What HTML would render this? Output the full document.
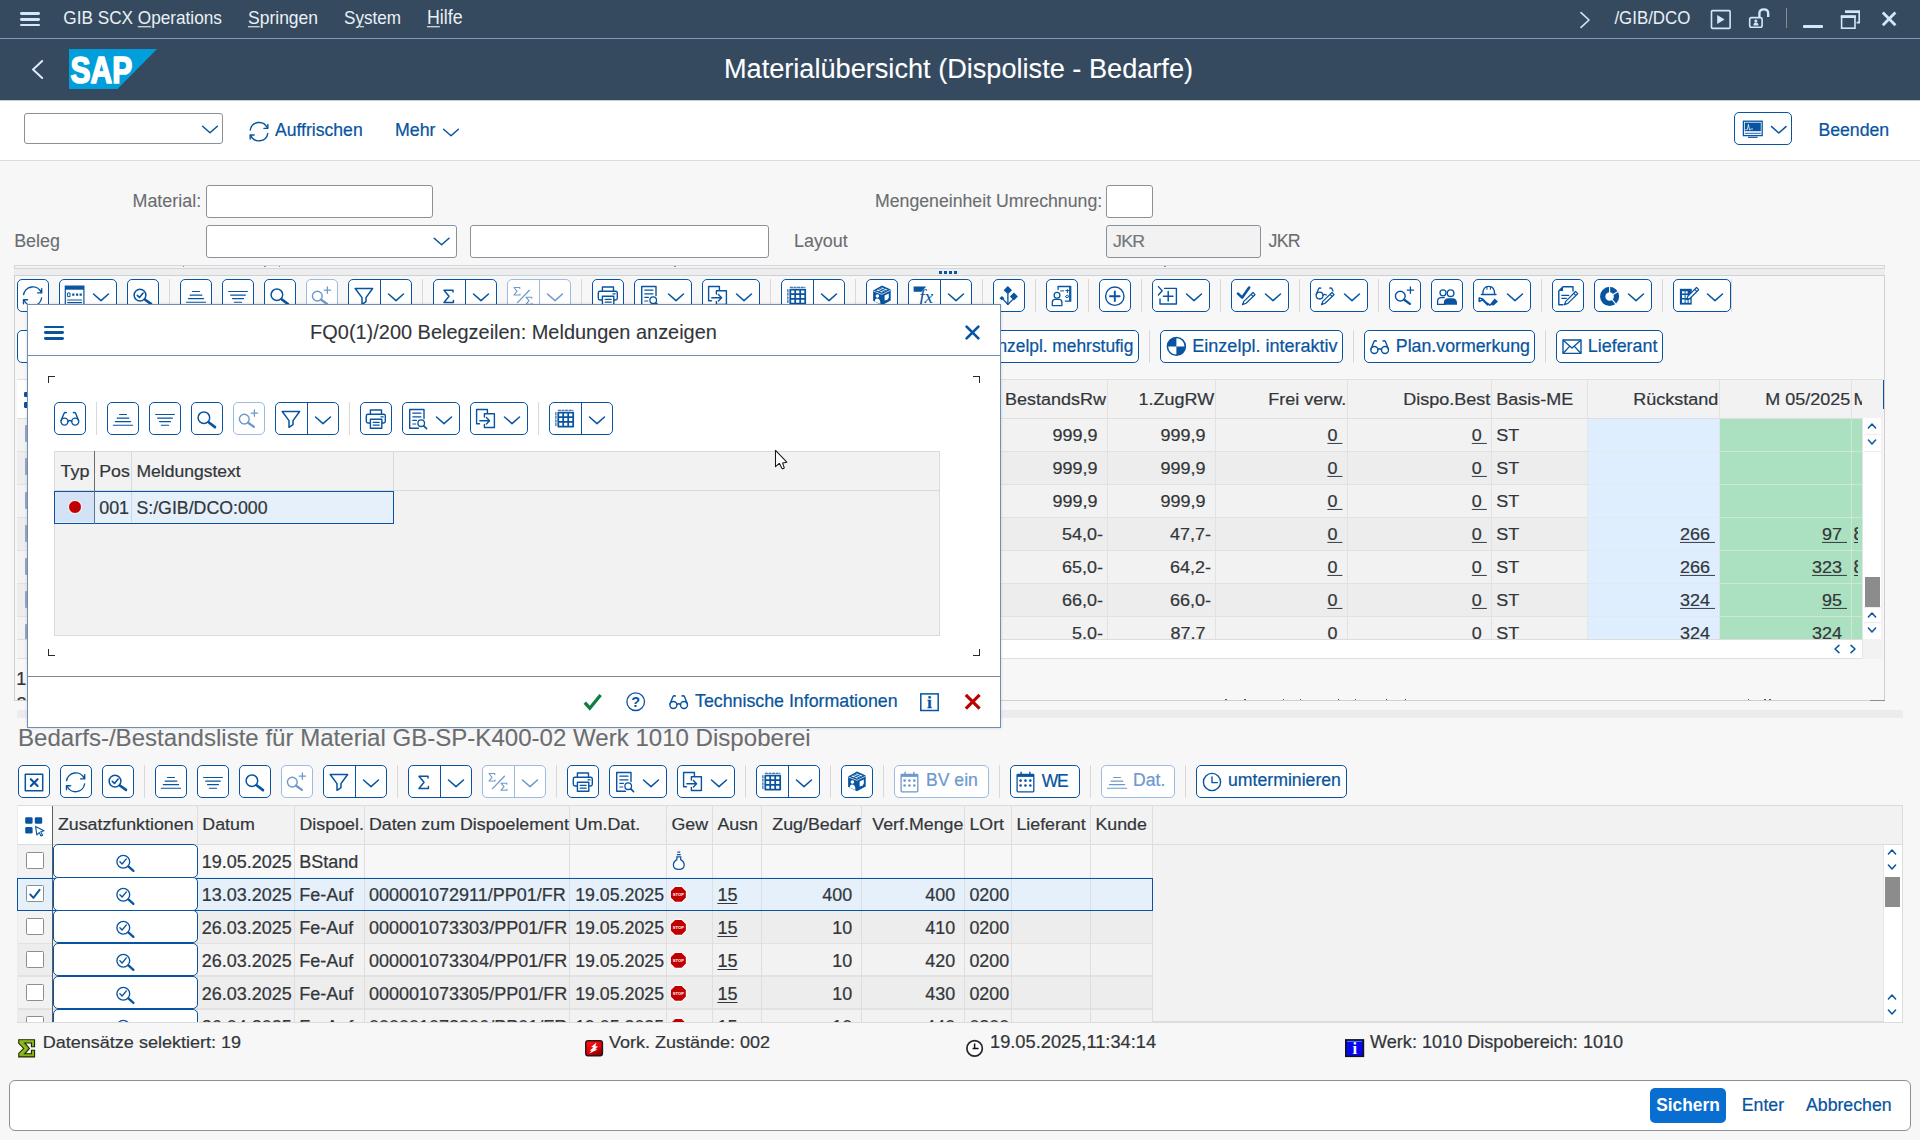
<!DOCTYPE html>
<html><head><meta charset="utf-8"><title>SAP</title>
<style>
*{box-sizing:border-box;}
html,body{margin:0;padding:0;}
body{width:1920px;height:1140px;position:relative;overflow:hidden;background:#f7f7f7;font-family:"Liberation Sans",sans-serif;font-size:17.8px;color:#32363a;-webkit-text-stroke:0.22px;}
div{position:absolute;}
svg{position:absolute;overflow:visible;}
.b{background:#fff;border:1.3px solid #0854a0;border-radius:5px;}
.bd{background:#fff;border:1.3px solid #9bbbe0;border-radius:5px;}
.sep{width:1px;background:#d9d9d9;}
.inp{background:#fff;border:1.3px solid #89919a;border-radius:3px;}
u{text-decoration:underline;text-underline-offset:2.2px;text-decoration-thickness:1px;}
</style></head><body>
<div class="" style="left:0px;top:0px;width:1920px;height:100px;background:#354a5f"></div>
<div class="" style="left:0px;top:38px;width:1920px;height:1.2px;background:#7f9cbc"></div>
<div class="" style="left:19.8px;top:12px;width:20.4px;height:2.8px;background:#d3e6fb;border-radius:1.4px"></div>
<div class="" style="left:19.8px;top:17.8px;width:20.4px;height:2.8px;background:#d3e6fb;border-radius:1.4px"></div>
<div class="" style="left:19.8px;top:23.6px;width:20.4px;height:2.8px;background:#d3e6fb;border-radius:1.4px"></div>
<div style="top:6.00px;font-size:17.2px;line-height:24px;color:#eaf0f6;white-space:pre;transform:scaleY(1.1);left:63.3px;transform-origin:0 18.00px;-webkit-text-stroke:0;">GIB SCX <u>O</u>perations</div>
<div style="top:6.00px;font-size:17.5px;line-height:24px;color:#eaf0f6;white-space:pre;transform:scaleY(1.1);left:248px;transform-origin:0 18.00px;-webkit-text-stroke:0;"><u>S</u>pringen</div>
<div style="top:7.00px;font-size:17.1px;line-height:24px;color:#eaf0f6;white-space:pre;transform:scaleY(1.1);left:344px;transform-origin:0 17.00px;-webkit-text-stroke:0;">S<u>y</u>stem</div>
<div style="top:6.00px;font-size:17.8px;line-height:24px;color:#eaf0f6;white-space:pre;transform:scaleY(1.1);left:427px;transform-origin:0 18.00px;-webkit-text-stroke:0;"><u>H</u>ilfe</div>
<svg style="left:1578px;top:10px" width="14" height="20" viewBox="0 0 14 20"><path d="M3 2.6 L11 10 L3 17.4" fill="none" stroke="#d3e6fb" stroke-width="1.6" stroke-linecap="round" stroke-linejoin="round"/></svg>
<div style="top:7.20px;font-size:16.9px;line-height:24px;color:#eaf0f6;white-space:pre;transform:scaleY(1.05);left:1614.4px;transform-origin:0 17.00px;-webkit-text-stroke:0;">/GIB/DCO</div>
<svg style="left:1710px;top:9px" width="22" height="22" viewBox="0 0 22 22"><rect x="1.5" y="1.6" width="18.6" height="17.8" rx="1" fill="none" stroke="#d3e6fb" stroke-width="1.6"/><path d="M7.2 6 L14.6 10.5 L7.2 15 Z" fill="#d3e6fb"/></svg>
<svg style="left:1747px;top:6px" width="24" height="24" viewBox="0 0 24 24"><path d="M12.4 11.6 V7.4 Q12.4 3.4 16.8 3.4 Q21.2 3.4 21.2 7.4 V11" fill="none" stroke="#d3e6fb" stroke-width="2.4" stroke-linecap="butt"/><rect x="2.7" y="11.6" width="12.4" height="9.6" rx="1.8" fill="none" stroke="#d3e6fb" stroke-width="1.6"/><circle cx="8.9" cy="15" r="1.5" fill="#d3e6fb"/><path d="M6.4 19.4 Q6.4 16.6 8.9 16.6 Q11.4 16.6 11.4 19.4 Z" fill="#d3e6fb"/></svg>
<div class="" style="left:1786px;top:8px;width:1.2px;height:20px;background:#8d8f84"></div>
<div class="" style="left:1803px;top:25px;width:19.6px;height:3px;background:#d3e6fb;border-radius:1px"></div>
<svg style="left:1840px;top:9px" width="22" height="22" viewBox="0 0 22 22"><path d="M5.6 3.2 H19.2 V13.6 H16.6" fill="none" stroke="#d3e6fb" stroke-width="1.6" stroke-linejoin="miter"/><path d="M5 2.6 H20" stroke="#d3e6fb" stroke-width="2.6"/><rect x="1.6" y="7.6" width="13.4" height="11.6" fill="none" stroke="#d3e6fb" stroke-width="1.6" stroke-linejoin="miter"/><path d="M0.8 7.6 H15.8" stroke="#d3e6fb" stroke-width="2.8"/></svg>
<svg style="left:1880px;top:10px" width="18" height="18" viewBox="0 0 18 18"><path d="M2.8 2.6 L15.4 15.2 M15.4 2.6 L2.8 15.2" fill="none" stroke="#d3e6fb" stroke-width="2.8" stroke-linecap="butt"/></svg>
<svg style="left:30px;top:58px" width="16" height="24" viewBox="0 0 16 24"><path d="M12.2 3 L3 11.4 L12.2 20" fill="none" stroke="#dfe9ff" stroke-width="2" stroke-linecap="round" stroke-linejoin="round"/></svg>
<svg style="left:69px;top:49px" width="89" height="40" viewBox="0 0 89 40"><path d="M0 0 H88 L48.5 40 H0 Z" fill="#009fdb"/><text x="1.6" y="33.9" font-family="Liberation Sans" font-weight="bold" font-size="37.6" fill="#fff" textLength="61.6" lengthAdjust="spacingAndGlyphs" stroke="#fff" stroke-width="1.7" stroke-linejoin="round">SAP</text></svg>
<div style="top:57.40px;font-size:27.15px;line-height:24px;color:#fff;white-space:pre;transform:scaleY(1.0);left:458.5px;width:1000px;text-align:center;transform-origin:50% 21.00px;-webkit-text-stroke:0.1px;">Materialübersicht (Dispoliste - Bedarfe)</div>
<div class="" style="left:0px;top:100px;width:1920px;height:61px;background:#fff;border-bottom:1.3px solid #dcdcdc"></div>
<div class="" style="left:0px;top:100px;width:1920px;height:0.8px;background:#c8ccd1"></div>
<div class="inp" style="left:24.2px;top:113px;width:199px;height:31px;"></div>
<svg style="left:201px;top:124px" width="18" height="12" viewBox="0 0 18 12"><path d="M1.6 2.2 L9 8.8 L16.4 2.2" fill="none" stroke="#0854a0" stroke-width="1.5" stroke-linecap="round" stroke-linejoin="round"/></svg>
<svg style="left:247px;top:115px" width="32" height="32" viewBox="0 0 32 32"><g transform="translate(-3.2,-0.2) scale(0.975)"><path d="M6.6 15.6 A9.2 9.2 0 0 1 24.2 13.6" fill="none" stroke="#0854a0" stroke-width="1.4" stroke-linecap="round" stroke-linejoin="round" /><path d="M24.6 19 A9.2 9.2 0 0 1 7 21" fill="none" stroke="#0854a0" stroke-width="1.4" stroke-linecap="round" stroke-linejoin="round" /><path d="M20.6 13.9 L24.7 13.9 L24.7 9.8" fill="none" stroke="#0854a0" stroke-width="1.4" stroke-linecap="round" stroke-linejoin="round" /><path d="M10.6 20.7 L6.5 20.7 L6.5 24.8" fill="none" stroke="#0854a0" stroke-width="1.4" stroke-linecap="round" stroke-linejoin="round" /></g></svg>
<div style="top:118.00px;font-size:17.6px;line-height:24px;color:#0854a0;white-space:pre;transform:scaleY(1.05);left:275px;transform-origin:0 18.00px;">Auffrischen</div>
<div style="top:118.00px;font-size:17.8px;line-height:24px;color:#0854a0;white-space:pre;transform:scaleY(1.05);left:395px;transform-origin:0 18.00px;">Mehr</div>
<svg style="left:442px;top:127px" width="18" height="12" viewBox="0 0 18 12"><path d="M1.6 2.2 L9 8.8 L16.4 2.2" fill="none" stroke="#0854a0" stroke-width="1.5" stroke-linecap="round" stroke-linejoin="round"/></svg>
<div class="b" style="left:1734px;top:112px;width:58px;height:33px;"></div>
<svg style="left:1734px;top:112px" width="58" height="33" viewBox="0 0 58 33"><rect x="9.4" y="9.2" width="18.8" height="14.4" fill="#fff" stroke="#0854a0" stroke-width="1.3"/><rect x="10.8" y="10.6" width="16" height="8.6" fill="#0854a0"/><path d="M11.4 17.6 H13.4 L14.4 12.4 L15.6 18.2 L16.6 17 H19" fill="none" stroke="#dbe8f6" stroke-width="0.9"/><path d="M10.8 21.3 H26.8" stroke="#0854a0" stroke-width="0.9"/><path d="M14 25.3 H23.6" stroke="#0854a0" stroke-width="1.2"/><path d="M37.6 14.6 L44.8 21 L52 14.6" fill="none" stroke="#0854a0" stroke-width="1.5" stroke-linecap="round" stroke-linejoin="round"/></svg>
<div style="top:118.00px;font-size:17.7px;line-height:24px;color:#0854a0;white-space:pre;transform:scaleY(1.05);left:1818.4px;transform-origin:0 18.00px;">Beenden</div>
<div style="top:189.20px;font-size:17.9px;line-height:24px;color:#6a6d70;white-space:pre;transform:scaleY(1.06);-webkit-text-stroke:0.1px;left:132.5px;transform-origin:0 18.00px;">Material:</div>
<div class="inp" style="left:206px;top:185px;width:227px;height:33px;"></div>
<div style="top:228.80px;font-size:17.9px;line-height:24px;color:#6a6d70;white-space:pre;transform:scaleY(1.06);-webkit-text-stroke:0.1px;left:14.2px;transform-origin:0 18.00px;">Beleg</div>
<div class="inp" style="left:206px;top:225px;width:251px;height:33px;"></div>
<svg style="left:432px;top:236px" width="20" height="12" viewBox="0 0 20 12"><path d="M2.2 2.2 L9.6 8.8 L17 2.2" fill="none" stroke="#0854a0" stroke-width="1.5" stroke-linecap="round" stroke-linejoin="round"/></svg>
<div class="inp" style="left:470px;top:225px;width:299px;height:33px;"></div>
<div style="top:228.80px;font-size:17.9px;line-height:24px;color:#6a6d70;white-space:pre;transform:scaleY(1.06);-webkit-text-stroke:0.1px;left:794px;transform-origin:0 18.00px;">Layout</div>
<div style="top:189.20px;font-size:17.7px;line-height:24px;color:#6a6d70;white-space:pre;transform:scaleY(1.06);-webkit-text-stroke:0.1px;left:875px;transform-origin:0 18.00px;">Mengeneinheit Umrechnung:</div>
<div class="inp" style="left:1106px;top:185px;width:47px;height:33px;"></div>
<div class="inp" style="left:1106px;top:225px;width:155px;height:33px;background:#f2f2f2"></div>
<div style="top:228.80px;font-size:17.8px;line-height:24px;color:#74777a;white-space:pre;transform:scaleY(0.965);left:1113px;transform-origin:0 18.00px;letter-spacing:-0.7px;">JKR</div>
<div style="top:228.80px;font-size:17.8px;line-height:24px;color:#6a6d70;white-space:pre;transform:scaleY(1.06);-webkit-text-stroke:0.1px;left:1268.5px;transform-origin:0 18.00px;letter-spacing:-0.7px;">JKR</div>
<div class="" style="left:14.2px;top:264.9px;width:1870.6px;height:4.1px;background:#f4f4f4;border:1px solid #d6d6d6"></div>
<div class="" style="left:14.2px;top:269px;width:1870.6px;height:6.2px;background:#ecedef"></div>
<div class="" style="left:14.2px;top:275.1px;width:1870.6px;height:425.5px;background:#f7f7f7;border:1.1px solid #d0d0d0"></div>
<div class="" style="left:939.0px;top:271.2px;width:2.8px;height:2.6px;background:#0854a0"></div>
<div class="" style="left:944.05px;top:271.2px;width:2.8px;height:2.6px;background:#0854a0"></div>
<div class="" style="left:949.1px;top:271.2px;width:2.8px;height:2.6px;background:#0854a0"></div>
<div class="" style="left:954.15px;top:271.2px;width:2.8px;height:2.6px;background:#0854a0"></div>
<div class="b" style="left:17.4px;top:279px;width:32px;height:32.5px;"></div>
<svg style="left:17.4px;top:279px" width="32" height="32" viewBox="0 0 32 32"><path d="M6.6 15.6 A9.2 9.2 0 0 1 24.2 13.6" fill="none" stroke="#0854a0" stroke-width="1.4" stroke-linecap="round" stroke-linejoin="round" /><path d="M24.6 19 A9.2 9.2 0 0 1 7 21" fill="none" stroke="#0854a0" stroke-width="1.4" stroke-linecap="round" stroke-linejoin="round" /><path d="M20.6 13.9 L24.7 13.9 L24.7 9.8" fill="none" stroke="#0854a0" stroke-width="1.4" stroke-linecap="round" stroke-linejoin="round" /><path d="M10.6 20.7 L6.5 20.7 L6.5 24.8" fill="none" stroke="#0854a0" stroke-width="1.4" stroke-linecap="round" stroke-linejoin="round" /></svg>
<div class="b" style="left:59.2px;top:279px;width:58px;height:32.5px;"></div>
<svg style="left:59.2px;top:279px" width="32" height="32" viewBox="0 0 32 32"><rect x="6.3" y="7.1" width="18.6" height="19.5" fill="#fff" stroke="#0854a0" stroke-width="1.2"/><rect x="6.3" y="7.1" width="18.6" height="3.6" fill="#0854a0"/><path d="M9 14h2v3.6h-2z" fill="none" stroke="#0854a0" stroke-width="1" stroke-linecap="round" stroke-linejoin="round" /><path d="M13.2 14.4h2.2v2.4h-2.2z M17 14.4h2.2v2.4h-2.2z M20.6 14.4h2.2v2.4h-2.2z" fill="#0854a0"/><path d="M8.6 21h14 M8.6 23.6h14" fill="none" stroke="#0854a0" stroke-width="1.1" stroke-linecap="round" stroke-linejoin="round" /></svg>
<svg style="left:85.2px;top:279px" width="32" height="32" viewBox="0 0 32 32"><path d="M8.5 15 L16 21.6 L23.5 15" fill="none" stroke="#0854a0" stroke-width="1.5" stroke-linecap="round" stroke-linejoin="round" /></svg>
<div class="b" style="left:127.2px;top:279px;width:32px;height:32.5px;"></div>
<svg style="left:127.2px;top:279px" width="32" height="32" viewBox="0 0 32 32"><circle cx="13" cy="16.1" r="5.9" fill="none" stroke="#0854a0" stroke-width="1.5" stroke-linecap="round" stroke-linejoin="round" /><path d="M17.8 20.5 L24 24.9" fill="none" stroke="#0854a0" stroke-width="2.6" stroke-linecap="round" stroke-linejoin="round" /><path d="M10.3 16.4 L12.5 18.5 L16.1 14" fill="none" stroke="#0854a0" stroke-width="1.6" stroke-linecap="round" stroke-linejoin="round" /></svg>
<div class="" style="left:168.9px;top:279px;width:1px;height:32.5px;background:#d9d9d9"></div>
<div class="b" style="left:180px;top:279px;width:32px;height:32.5px;"></div>
<svg style="left:180px;top:279px" width="32" height="32" viewBox="0 0 32 32"><path d="M12.5 12.5h7 M10.1 16.1h11.8 M8.3 19.6h15.4 M6.4 23.2h19.2" fill="none" stroke="#0854a0" stroke-width="1.1" stroke-linecap="round" stroke-linejoin="round" /></svg>
<div class="b" style="left:222px;top:279px;width:32px;height:32.5px;"></div>
<svg style="left:222px;top:279px" width="32" height="32" viewBox="0 0 32 32"><path d="M6.6 12.5h18.8 M8.6 16.1h14.8 M10.5 19.6h11 M12.4 23.2h7.2" fill="none" stroke="#0854a0" stroke-width="1.1" stroke-linecap="round" stroke-linejoin="round" /></svg>
<div class="b" style="left:264px;top:279px;width:32px;height:32.5px;"></div>
<svg style="left:264px;top:279px" width="32" height="32" viewBox="0 0 32 32"><circle cx="12.9" cy="15.7" r="5.8" fill="none" stroke="#0854a0" stroke-width="1.5" stroke-linecap="round" stroke-linejoin="round" /><path d="M17.6 20.2 L24 25.1" fill="none" stroke="#0854a0" stroke-width="2.6" stroke-linecap="round" stroke-linejoin="round" /></svg>
<div class="bd" style="left:306px;top:279px;width:32px;height:32.5px;"></div>
<svg style="left:306px;top:279px" width="32" height="32" viewBox="0 0 32 32"><circle cx="11.3" cy="17.1" r="4.9" fill="none" stroke="#6d99cc" stroke-width="1.4" stroke-linecap="round" stroke-linejoin="round" /><path d="M15.2 20.7 L20.9 24.9" fill="none" stroke="#6d99cc" stroke-width="2.3" stroke-linecap="round" stroke-linejoin="round" /><path d="M18.2 11.1h6.4 M21.4 7.9v6.4" fill="none" stroke="#6d99cc" stroke-width="1.3" stroke-linecap="round" stroke-linejoin="round" /></svg>
<div class="b" style="left:348px;top:279px;width:64px;height:32.5px;"></div>
<div class="" style="left:379.6px;top:279px;width:1.3px;height:32.5px;background:#0854a0"></div>
<svg style="left:348px;top:279px" width="32" height="32" viewBox="0 0 32 32"><path d="M7.2 9.5 H24.6 L18 18.6 V22.6 L14 25.3 V18.6 Z" fill="none" stroke="#0854a0" stroke-width="1.5" stroke-linecap="round" stroke-linejoin="round" /></svg>
<svg style="left:380px;top:279px" width="32" height="32" viewBox="0 0 32 32"><path d="M8.5 15 L16 21.6 L23.5 15" fill="none" stroke="#0854a0" stroke-width="1.5" stroke-linecap="round" stroke-linejoin="round" /></svg>
<div class="" style="left:421.9px;top:279px;width:1px;height:32.5px;background:#d9d9d9"></div>
<div class="b" style="left:433.2px;top:279px;width:64px;height:32.5px;"></div>
<div class="" style="left:464.8px;top:279px;width:1.3px;height:32.5px;background:#0854a0"></div>
<svg style="left:433.2px;top:279px" width="32" height="32" viewBox="0 0 32 32"><path d="M20 13 V11.2 H11 L16 17.3 L11 23.5 H20.4 V21.6" fill="none" stroke="#0854a0" stroke-width="1.5" stroke-linecap="round" stroke-linejoin="round" /></svg>
<svg style="left:465.2px;top:279px" width="32" height="32" viewBox="0 0 32 32"><path d="M8.5 15 L16 21.6 L23.5 15" fill="none" stroke="#0854a0" stroke-width="1.5" stroke-linecap="round" stroke-linejoin="round" /></svg>
<div class="bd" style="left:507.4px;top:279px;width:64px;height:32.5px;"></div>
<div class="" style="left:539.0px;top:279px;width:1.3px;height:32.5px;background:#9bbbe0"></div>
<svg style="left:507.4px;top:279px" width="32" height="32" viewBox="0 0 32 32"><path d="M12.8 9.5 V8.5 H7 L10 12.3 L7 16 H13 V15" fill="none" stroke="#6d99cc" stroke-width="1.1" stroke-linecap="round" stroke-linejoin="round" /><path d="M10.5 23.6 L22.4 11.2" fill="none" stroke="#6d99cc" stroke-width="1.3" stroke-linecap="round" stroke-linejoin="round" /><path d="M24.8 19.2 V18.2 H19 L22 21.7 L19 25.3 H25 V24.3" fill="none" stroke="#6d99cc" stroke-width="1.1" stroke-linecap="round" stroke-linejoin="round" /></svg>
<svg style="left:539.4px;top:279px" width="32" height="32" viewBox="0 0 32 32"><path d="M8.5 15 L16 21.6 L23.5 15" fill="none" stroke="#6d99cc" stroke-width="1.5" stroke-linecap="round" stroke-linejoin="round" /></svg>
<div class="" style="left:580.9px;top:279px;width:1px;height:32.5px;background:#d9d9d9"></div>
<div class="b" style="left:592px;top:279px;width:32px;height:32.5px;"></div>
<svg style="left:592px;top:279px" width="32" height="32" viewBox="0 0 32 32"><path d="M10.4 12.3 V8 H21.5 V12.3" fill="none" stroke="#0854a0" stroke-width="1.4" stroke-linecap="round" stroke-linejoin="round" /><path d="M10.4 21 H8 Q6.3 21 6.3 19.3 V14 Q6.3 12.3 8 12.3 H23.6 Q25.3 12.3 25.3 14 V19.3 Q25.3 21 23.6 21 H21.8" fill="none" stroke="#0854a0" stroke-width="1.4" stroke-linecap="round" stroke-linejoin="round" /><path d="M10.4 17.2 H21.8 V26.2 H10.4 Z" fill="#fff" stroke="#0854a0" stroke-width="1.4" stroke-linejoin="round"/><path d="M13.2 20.4h6 M13.2 23.2h6 M21 14.8h2.2" fill="none" stroke="#0854a0" stroke-width="1.2" stroke-linecap="round" stroke-linejoin="round" /></svg>
<div class="b" style="left:634.4px;top:279px;width:58px;height:32.5px;"></div>
<svg style="left:634.4px;top:279px" width="32" height="32" viewBox="0 0 32 32"><path d="M16.5 26.2 H7.7 V7.5 H22 V16.5" fill="none" stroke="#0854a0" stroke-width="1.4" stroke-linecap="round" stroke-linejoin="round" /><path d="M10.8 11.2h8.2 M10.8 14.8h8.2 M10.8 18.4h3.6 M10.8 22h3" fill="none" stroke="#0854a0" stroke-width="1.2" stroke-linecap="round" stroke-linejoin="round" /><circle cx="19.2" cy="21.2" r="3.3" fill="none" stroke="#0854a0" stroke-width="1.3" stroke-linecap="round" stroke-linejoin="round" /><path d="M21.7 23.8 L24.6 26.6" fill="none" stroke="#0854a0" stroke-width="1.6" stroke-linecap="round" stroke-linejoin="round" /></svg>
<svg style="left:660.4px;top:279px" width="32" height="32" viewBox="0 0 32 32"><path d="M8.5 15 L16 21.6 L23.5 15" fill="none" stroke="#0854a0" stroke-width="1.5" stroke-linecap="round" stroke-linejoin="round" /></svg>
<div class="b" style="left:702.3px;top:279px;width:58px;height:32.5px;"></div>
<svg style="left:702.3px;top:279px" width="32" height="32" viewBox="0 0 32 32"><path d="M17.4 11 V7.5 H6.6 V21.8 H9.5" fill="none" stroke="#0854a0" stroke-width="1.4" stroke-linecap="round" stroke-linejoin="round" /><path d="M14.4 15 V11.8 H24.4 V25.5 H14.4 V22.5" fill="none" stroke="#0854a0" stroke-width="1.4" stroke-linecap="round" stroke-linejoin="round" /><path d="M9.8 18.8 H19.4 M16.4 15.6 L19.6 18.8 L16.4 22" fill="none" stroke="#0854a0" stroke-width="1.4" stroke-linecap="round" stroke-linejoin="round" /></svg>
<svg style="left:728.3px;top:279px" width="32" height="32" viewBox="0 0 32 32"><path d="M8.5 15 L16 21.6 L23.5 15" fill="none" stroke="#0854a0" stroke-width="1.5" stroke-linecap="round" stroke-linejoin="round" /></svg>
<div class="" style="left:770.1px;top:279px;width:1px;height:32.5px;background:#d9d9d9"></div>
<div class="b" style="left:781.2px;top:279px;width:64px;height:32.5px;"></div>
<div class="" style="left:812.8000000000001px;top:279px;width:1.3px;height:32.5px;background:#0854a0"></div>
<svg style="left:781.2px;top:279px" width="32" height="32" viewBox="0 0 32 32"><path d="M9.3 8.3 H24" fill="none" stroke="#0854a0" stroke-width="1.1" stroke-linecap="round" stroke-linejoin="round" stroke-dasharray='2.2 1.4'/><path d="M6.9 10.5 V24.5" fill="none" stroke="#0854a0" stroke-width="1.1" stroke-linecap="round" stroke-linejoin="round" stroke-dasharray='2.2 1.4'/><path d="M9.3 10.6 H24.2 V24.6 H9.3 Z M14.2 10.6 V24.6 M19.2 10.6 V24.6 M9.3 15.2 H24.2 M9.3 19.9 H24.2" fill="none" stroke="#0854a0" stroke-width="1.75" stroke-linecap="round" stroke-linejoin="round" /></svg>
<svg style="left:813.2px;top:279px" width="32" height="32" viewBox="0 0 32 32"><path d="M8.5 15 L16 21.6 L23.5 15" fill="none" stroke="#0854a0" stroke-width="1.5" stroke-linecap="round" stroke-linejoin="round" /></svg>
<div class="" style="left:854.5px;top:279px;width:1px;height:32.5px;background:#d9d9d9"></div>
<div class="b" style="left:866px;top:279px;width:32px;height:32.5px;"></div>
<svg style="left:866px;top:279px" width="32" height="32" viewBox="0 0 32 32"><path d="M15.95 6.6 L24.7 10.6 V21.6 L15.95 26.2 L7.1 21.8 V11.4 Z" fill="#0854a0"/><path d="M10.2 11.3 L15.9 8.5 L21.6 10.8 L16 13.6 Z" fill="#fff"/><path d="M12.2 10.3 L18 12.7 M14.1 9.4 L19.9 11.7 M13 12.6 L18.8 9.6" stroke="#0854a0" stroke-width="0.9"/><path d="M7.4 12 L16 15.4 L24.5 11.2" fill="none" stroke="#fff" stroke-width="0.7"/><circle cx="11.4" cy="17" r="1.8" fill="#fff"/><path d="M8.8 22.6 Q8.8 19.4 11.6 19.6 Q14.4 19.8 14.4 25 Z" fill="#fff"/><path d="M18.6 16.4 L22.8 14.4 V18.6 L21.4 20.8 L18.6 21.4 Z" fill="#fff"/></svg>
<div class="b" style="left:908.4px;top:279px;width:64px;height:32.5px;"></div>
<div class="" style="left:940.0px;top:279px;width:1.3px;height:32.5px;background:#0854a0"></div>
<svg style="left:908.4px;top:279px" width="32" height="32" viewBox="0 0 32 32"><path d="M5.6 7.4 H18.1 L13.8 12.7 H5.6 Z" fill="#0854a0"/><text x="11.2" y="23.7" font-family="Liberation Serif" font-style="italic" font-size="19.5" fill="#0854a0">fx</text></svg>
<svg style="left:940.4px;top:279px" width="32" height="32" viewBox="0 0 32 32"><path d="M8.5 15 L16 21.6 L23.5 15" fill="none" stroke="#0854a0" stroke-width="1.5" stroke-linecap="round" stroke-linejoin="round" /></svg>
<div class="" style="left:982.0px;top:279px;width:1px;height:32.5px;background:#d9d9d9"></div>
<div class="b" style="left:993.2px;top:279px;width:32px;height:32.5px;"></div>
<svg style="left:993.2px;top:279px" width="32" height="32" viewBox="0 0 32 32"><path d="M14.85 6.95 L19.05 11.15 L14.85 15.35 L10.65 11.15 Z M20.9 13.4 L24.9 17.4 L20.9 21.4 L16.9 17.4 Z M8.9 17.1 L11.4 19.2 L8.9 21.3 L6.4 19.2 Z" fill="#0854a0"/><path d="M14.85 14.4 V25.2" fill="none" stroke="#2f6fb5" stroke-width="1.6" stroke-linecap="round" stroke-linejoin="round" /><path d="M9.8 19.9 L14.85 25.5 L19.6 20.6" fill="none" stroke="#0854a0" stroke-width="1.3" stroke-linecap="round" stroke-linejoin="round" /></svg>
<div class="" style="left:1034.8px;top:279px;width:1px;height:32.5px;background:#d9d9d9"></div>
<div class="b" style="left:1046px;top:279px;width:32px;height:32.5px;"></div>
<svg style="left:1046px;top:279px" width="32" height="32" viewBox="0 0 32 32"><path d="M12.1 10.6 V7.5 H24.7 V22.2 H19.4" fill="none" stroke="#0854a0" stroke-width="1.3" stroke-linecap="round" stroke-linejoin="round" /><path d="M23.5 8 V21.8" fill="none" stroke="#0854a0" stroke-width="0.9" stroke-linecap="round" stroke-linejoin="round" /><path d="M14.6 11.9h3 M19.8 11.6h3.2 M21.4 10.6v3 M19.6 17.4 L21.3 16.2 L23 17.4 L21.3 18.6 Z" fill="none" stroke="#0854a0" stroke-width="1" stroke-linecap="round" stroke-linejoin="round" /><circle cx="11" cy="16.3" r="2.9" fill="#fff" stroke="#0854a0" stroke-width="1.3"/><path d="M6.3 26.6 V23.4 Q6.3 20.4 9.2 20.4 H13 Q15.9 20.4 15.9 23.4 V26.6 Z" fill="#fff" stroke="#0854a0" stroke-width="1.3" stroke-linejoin="round"/></svg>
<div class="" style="left:1087.8px;top:279px;width:1px;height:32.5px;background:#d9d9d9"></div>
<div class="b" style="left:1099px;top:279px;width:32px;height:32.5px;"></div>
<svg style="left:1099px;top:279px" width="32" height="32" viewBox="0 0 32 32"><circle cx="15.8" cy="17.2" r="9.2" fill="none" stroke="#0854a0" stroke-width="1.4" stroke-linecap="round" stroke-linejoin="round" /><path d="M11 17.2h9.6 M15.8 12.4v9.6" fill="none" stroke="#0854a0" stroke-width="1.9" stroke-linecap="round" stroke-linejoin="round" /></svg>
<div class="" style="left:1140.8px;top:279px;width:1px;height:32.5px;background:#d9d9d9"></div>
<div class="b" style="left:1152px;top:279px;width:58px;height:32.5px;"></div>
<svg style="left:1152px;top:279px" width="32" height="32" viewBox="0 0 32 32"><path d="M6.4 7.6 L10.2 11.8 L6.4 16" fill="none" stroke="#0854a0" stroke-width="1.4" stroke-linecap="round" stroke-linejoin="round" /><path d="M12.5 9.4 H24.4 V25 H8 V20" fill="none" stroke="#0854a0" stroke-width="1.4" stroke-linecap="round" stroke-linejoin="round" /><path d="M11.5 17.2h9.4 M16.2 12.5v9.4" fill="none" stroke="#0854a0" stroke-width="1.5" stroke-linecap="round" stroke-linejoin="round" /></svg>
<svg style="left:1178px;top:279px" width="32" height="32" viewBox="0 0 32 32"><path d="M8.5 15 L16 21.6 L23.5 15" fill="none" stroke="#0854a0" stroke-width="1.5" stroke-linecap="round" stroke-linejoin="round" /></svg>
<div class="" style="left:1219.8px;top:279px;width:1px;height:32.5px;background:#d9d9d9"></div>
<div class="b" style="left:1231px;top:279px;width:58px;height:32.5px;"></div>
<svg style="left:1231px;top:279px" width="32" height="32" viewBox="0 0 32 32"><path d="M7 14.6 L11.2 18.6 L18.2 8.6" fill="none" stroke="#0854a0" stroke-width="2.6" stroke-linecap="round" stroke-linejoin="round" /><path d="M11.5 25.6 L15.1 24.3 L24.0 15.7 L22.0 13.5 L13.0 22.1 Z" fill="#fff" stroke="#0854a0" stroke-width="1.2" stroke-linejoin="round"/><path d="M22.2 17.5 L20.1 15.3" stroke="#0854a0" stroke-width="1.1"/><path d="M11.5 25.6 L13.6 24.9 L12.3 23.5 Z" fill="#0854a0"/></svg>
<svg style="left:1257px;top:279px" width="32" height="32" viewBox="0 0 32 32"><path d="M8.5 15 L16 21.6 L23.5 15" fill="none" stroke="#0854a0" stroke-width="1.5" stroke-linecap="round" stroke-linejoin="round" /></svg>
<div class="" style="left:1298.8px;top:279px;width:1px;height:32.5px;background:#d9d9d9"></div>
<div class="b" style="left:1310px;top:279px;width:58px;height:32.5px;"></div>
<svg style="left:1310px;top:279px" width="32" height="32" viewBox="0 0 32 32"><circle cx="9.6" cy="16.6" r="3.4" fill="none" stroke="#0854a0" stroke-width="1.3" stroke-linecap="round" stroke-linejoin="round" /><path d="M6.2 15.6 L8.6 9.8 Q9.2 8.6 10.8 9.2 M13 16.2 Q14.6 14.8 16.2 16 M19.8 9.2 Q21.4 8.6 22 9.8 L23 12" fill="none" stroke="#0854a0" stroke-width="1.3" stroke-linecap="round" stroke-linejoin="round" /><path d="M11.5 25.6 L15.1 24.3 L24.0 15.7 L22.0 13.5 L13.0 22.1 Z" fill="#fff" stroke="#0854a0" stroke-width="1.2" stroke-linejoin="round"/><path d="M22.2 17.5 L20.1 15.3" stroke="#0854a0" stroke-width="1.1"/><path d="M11.5 25.6 L13.6 24.9 L12.3 23.5 Z" fill="#0854a0"/></svg>
<svg style="left:1336px;top:279px" width="32" height="32" viewBox="0 0 32 32"><path d="M8.5 15 L16 21.6 L23.5 15" fill="none" stroke="#0854a0" stroke-width="1.5" stroke-linecap="round" stroke-linejoin="round" /></svg>
<div class="" style="left:1377.8px;top:279px;width:1px;height:32.5px;background:#d9d9d9"></div>
<div class="b" style="left:1389px;top:279px;width:32px;height:32.5px;"></div>
<svg style="left:1389px;top:279px" width="32" height="32" viewBox="0 0 32 32"><circle cx="11.3" cy="17.1" r="4.9" fill="none" stroke="#0854a0" stroke-width="1.4" stroke-linecap="round" stroke-linejoin="round" /><path d="M15.2 20.7 L20.9 24.9" fill="none" stroke="#0854a0" stroke-width="2.3" stroke-linecap="round" stroke-linejoin="round" /><path d="M18.2 11.1h6.4 M21.4 7.9v6.4" fill="none" stroke="#0854a0" stroke-width="1.3" stroke-linecap="round" stroke-linejoin="round" /></svg>
<div class="b" style="left:1431px;top:279px;width:32px;height:32.5px;"></div>
<svg style="left:1431px;top:279px" width="32" height="32" viewBox="0 0 32 32"><circle cx="12" cy="13.8" r="3" fill="#fff"  stroke="#0854a0" stroke-width="1.3" stroke-linecap="round" stroke-linejoin="round" /><path d="M6.6 25.4 V22.4 Q6.6 18.6 10.4 18.6 H13.4" fill="none" stroke="#0854a0" stroke-width="1.3" stroke-linecap="round" stroke-linejoin="round" /><path d="M6.6 25.4 H14" fill="none" stroke="#0854a0" stroke-width="1.3" stroke-linecap="round" stroke-linejoin="round" /><circle cx="19.6" cy="14.2" r="3.3" fill="#fff" stroke="#0854a0" stroke-width="1.4"/><path d="M12.8 25.8 V24 Q12.8 19.2 17.4 19.2 H21.4 Q26 19.2 26 24 V25.8 Z" fill="#0854a0"/></svg>
<div class="b" style="left:1473px;top:279px;width:58px;height:32.5px;"></div>
<svg style="left:1473px;top:279px" width="32" height="32" viewBox="0 0 32 32"><path d="M9.8 15.2 Q9.8 7.4 15.7 7.4 Q21.6 7.4 21.6 15.2" fill="#fff"  stroke="#0854a0" stroke-width="1.3" stroke-linecap="round" stroke-linejoin="round" /><path d="M8.4 15.5 H23" fill="none" stroke="#0854a0" stroke-width="1.4" stroke-linecap="round" stroke-linejoin="round" /><path d="M14 7.8 V10.4 M17.4 7.8 V10.4" fill="none" stroke="#0854a0" stroke-width="1" stroke-linecap="round" stroke-linejoin="round" /><path d="M9.4 20.2 L14.6 25.6" fill="none" stroke="#0854a0" stroke-width="2.2" stroke-linecap="round" stroke-linejoin="round" /><path d="M6.4 19 L8.6 19.6 M6.6 22.2 L8.8 21.4 M6.2 19 V22.4" fill="none" stroke="#0854a0" stroke-width="1.5" stroke-linecap="round" stroke-linejoin="round" /><path d="M16.6 25.8 L21.6 19.4 L25 22.4 L20.6 26.4 Z" fill="#0854a0"/><path d="M14.4 24.4 L17 26.2" fill="none" stroke="#0854a0" stroke-width="1.5" stroke-linecap="round" stroke-linejoin="round" /></svg>
<svg style="left:1499px;top:279px" width="32" height="32" viewBox="0 0 32 32"><path d="M8.5 15 L16 21.6 L23.5 15" fill="none" stroke="#0854a0" stroke-width="1.5" stroke-linecap="round" stroke-linejoin="round" /></svg>
<div class="" style="left:1540.8px;top:279px;width:1px;height:32.5px;background:#d9d9d9"></div>
<div class="b" style="left:1552px;top:279px;width:32px;height:32.5px;"></div>
<svg style="left:1552px;top:279px" width="32" height="32" viewBox="0 0 32 32"><path d="M21 12 V7.8 H11 L6.8 12 V25.8 H11" fill="none" stroke="#0854a0" stroke-width="1.4" stroke-linecap="round" stroke-linejoin="round" /><path d="M11 7.8 V12 H6.8 Z" fill="#0854a0"/><path d="M9.8 16.4h7 M9.8 19.4h4.6" fill="none" stroke="#0854a0" stroke-width="1.1" stroke-linecap="round" stroke-linejoin="round" /><path d="M12.4 25.8 L15.9 24.4 L25.7 14.7 L23.5 12.5 L13.8 22.3 Z" fill="#fff" stroke="#0854a0" stroke-width="1.2" stroke-linejoin="round"/><path d="M23.8 16.5 L21.7 14.4" stroke="#0854a0" stroke-width="1.1"/><path d="M12.4 25.8 L14.5 25.1 L13.1 23.7 Z" fill="#0854a0"/></svg>
<div class="b" style="left:1594px;top:279px;width:58px;height:32.5px;"></div>
<svg style="left:1594px;top:279px" width="32" height="32" viewBox="0 0 32 32"><circle cx="15.6" cy="17.4" r="6.9" fill="none" stroke="#0854a0" stroke-width="5.3"/><path d="M15.6 17.4 L15.6 6.5 M15.6 17.4 L25.4 11.8 M15.6 17.4 L22.6 26.2" stroke="#fff" stroke-width="1.1"/></svg>
<svg style="left:1620px;top:279px" width="32" height="32" viewBox="0 0 32 32"><path d="M8.5 15 L16 21.6 L23.5 15" fill="none" stroke="#0854a0" stroke-width="1.5" stroke-linecap="round" stroke-linejoin="round" /></svg>
<div class="" style="left:1661.8px;top:279px;width:1px;height:32.5px;background:#d9d9d9"></div>
<div class="b" style="left:1673px;top:279px;width:58px;height:32.5px;"></div>
<svg style="left:1673px;top:279px" width="32" height="32" viewBox="0 0 32 32"><rect x="6.9" y="9.8" width="11.8" height="15.8" fill="#0854a0"/><path d="M9 12.2h2.6v2.4h-2.6z M12.6 12.2h2v2.4h-2z M9 16h2.6v3h-2.6z M12.6 16h2v3h-2z M9 20.4h2.6v3.4h-2.6z M12.6 20.4h2v3.4h-2z M15.6 20.4h1.8v3.4h-1.8z" fill="#fff"/><path d="M13.6 20.6 L17.1 19.2 L25.7 10.7 L23.5 8.5 L15.0 17.1 Z" fill="#fff" stroke="#0854a0" stroke-width="1.2" stroke-linejoin="round"/><path d="M23.8 12.5 L21.7 10.4" stroke="#0854a0" stroke-width="1.1"/><path d="M13.6 20.6 L15.7 19.9 L14.3 18.5 Z" fill="#0854a0"/></svg>
<svg style="left:1699px;top:279px" width="32" height="32" viewBox="0 0 32 32"><path d="M8.5 15 L16 21.6 L23.5 15" fill="none" stroke="#0854a0" stroke-width="1.5" stroke-linecap="round" stroke-linejoin="round" /></svg>
<div class="" style="left:1730.9px;top:279px;width:1px;height:32.5px;background:#d9d9d9"></div>
<div class="b" style="left:17.4px;top:330px;width:60px;height:32.5px;"></div>
<div class="b" style="left:860px;top:330px;width:279px;height:32.5px;"></div>
<div style="top:333.60px;font-size:17.35px;line-height:24px;color:#0854a0;white-space:pre;transform:scaleY(1.03);left:982.0px;transform-origin:0 18.00px;">Einzelpl. mehrstufig</div>
<div class="" style="left:1148.7px;top:330px;width:1px;height:32.5px;background:#d9d9d9"></div>
<div class="b" style="left:1160px;top:330px;width:183px;height:32.5px;"></div>
<svg style="left:1165.5px;top:336.2px" width="20" height="20" viewBox="0 0 20 20"><g transform="scale(1.04)"><circle cx="10" cy="10" r="8.6" fill="none" stroke="#0854a0" stroke-width="1.5" stroke-linecap="round" stroke-linejoin="round" /><path d="M10 10 V1.4 A8.6 8.6 0 0 0 1.4 10 Z M10 10 V18.6 A8.6 8.6 0 0 0 18.6 10 Z" fill="#0854a0"/></g></svg>
<div style="top:333.60px;font-size:18.05px;line-height:24px;color:#0854a0;white-space:pre;transform:scaleY(1.03);left:1192.3px;transform-origin:0 18.00px;">Einzelpl. interaktiv</div>
<div class="" style="left:1352.9px;top:330px;width:1px;height:32.5px;background:#d9d9d9"></div>
<div class="b" style="left:1364px;top:330px;width:171px;height:32.5px;"></div>
<svg style="left:1369.6px;top:339.6px" width="20" height="20" viewBox="0 0 20 20"><g transform="scale(1.0)"><circle cx="4.4" cy="10" r="3.5" fill="none" stroke="#0854a0" stroke-width="1.4" stroke-linecap="round" stroke-linejoin="round" /><circle cx="15" cy="10" r="3.5" fill="none" stroke="#0854a0" stroke-width="1.4" stroke-linecap="round" stroke-linejoin="round" /><path d="M7.9 9.6 Q9.7 8 11.5 9.6 M1 9 L3.9 1.8 Q4.5 0.4 6.3 1 M18.4 9 L15.5 1.8 Q14.9 0.4 13.1 1" fill="none" stroke="#0854a0" stroke-width="1.4" stroke-linecap="round" stroke-linejoin="round" /></g></svg>
<div style="top:333.60px;font-size:17.75px;line-height:24px;color:#0854a0;white-space:pre;transform:scaleY(1.03);left:1395.8px;transform-origin:0 18.00px;">Plan.vormerkung</div>
<div class="" style="left:1544.9px;top:330px;width:1px;height:32.5px;background:#d9d9d9"></div>
<div class="b" style="left:1556px;top:330px;width:107px;height:32.5px;"></div>
<svg style="left:1561.6px;top:337.4px" width="20" height="20" viewBox="0 0 20 20"><g transform="scale(1.0)"><rect x="1" y="3" width="18" height="13.4" fill="none" stroke="#0854a0" stroke-width="1.4" stroke-linecap="round" stroke-linejoin="round" /><path d="M1.4 3.4 L10 11 L18.6 3.4 M1.4 16 L7.4 9.6 M18.6 16 L12.6 9.6" fill="none" stroke="#0854a0" stroke-width="1.3" stroke-linecap="round" stroke-linejoin="round" /></g></svg>
<div style="top:333.60px;font-size:17.9px;line-height:24px;color:#0854a0;white-space:pre;transform:scaleY(1.03);left:1587.8px;transform-origin:0 18.00px;">Lieferant</div>
<div class="" style="left:17px;top:379.4px;width:1866px;height:39.80000000000001px;background:#f2f2f2"></div>
<div class="" style="left:17px;top:379.4px;width:40px;height:38.80000000000001px;background:#fff"></div>
<div class="" style="left:17px;top:418.2px;width:1845.4px;height:33.05000000000001px;background:#f2f2f2"></div>
<div class="" style="left:1587.4px;top:418.2px;width:132.0999999999999px;height:33.05000000000001px;background:#dfeeff"></div>
<div class="" style="left:1719.5px;top:418.2px;width:142.9000000000001px;height:33.05000000000001px;background:#abe0c0"></div>
<div class="" style="left:17px;top:451.25px;width:1845.4px;height:33.049999999999955px;background:#ededed"></div>
<div class="" style="left:1587.4px;top:451.25px;width:132.0999999999999px;height:33.049999999999955px;background:#dfeeff"></div>
<div class="" style="left:1719.5px;top:451.25px;width:142.9000000000001px;height:33.049999999999955px;background:#abe0c0"></div>
<div class="" style="left:17px;top:484.29999999999995px;width:1845.4px;height:33.05000000000007px;background:#f2f2f2"></div>
<div class="" style="left:1587.4px;top:484.29999999999995px;width:132.0999999999999px;height:33.05000000000007px;background:#dfeeff"></div>
<div class="" style="left:1719.5px;top:484.29999999999995px;width:142.9000000000001px;height:33.05000000000007px;background:#abe0c0"></div>
<div class="" style="left:17px;top:517.35px;width:1845.4px;height:33.049999999999955px;background:#ededed"></div>
<div class="" style="left:1587.4px;top:517.35px;width:132.0999999999999px;height:33.049999999999955px;background:#dfeeff"></div>
<div class="" style="left:1719.5px;top:517.35px;width:142.9000000000001px;height:33.049999999999955px;background:#abe0c0"></div>
<div class="" style="left:17px;top:550.4px;width:1845.4px;height:33.05000000000007px;background:#f2f2f2"></div>
<div class="" style="left:1587.4px;top:550.4px;width:132.0999999999999px;height:33.05000000000007px;background:#dfeeff"></div>
<div class="" style="left:1719.5px;top:550.4px;width:142.9000000000001px;height:33.05000000000007px;background:#abe0c0"></div>
<div class="" style="left:17px;top:583.45px;width:1845.4px;height:33.049999999999955px;background:#ededed"></div>
<div class="" style="left:1587.4px;top:583.45px;width:132.0999999999999px;height:33.049999999999955px;background:#dfeeff"></div>
<div class="" style="left:1719.5px;top:583.45px;width:142.9000000000001px;height:33.049999999999955px;background:#abe0c0"></div>
<div class="" style="left:17px;top:616.5px;width:1845.4px;height:22.299999999999955px;background:#f2f2f2"></div>
<div class="" style="left:1587.4px;top:616.5px;width:132.0999999999999px;height:22.299999999999955px;background:#dfeeff"></div>
<div class="" style="left:1719.5px;top:616.5px;width:142.9000000000001px;height:22.299999999999955px;background:#abe0c0"></div>
<div class="" style="left:17px;top:450.65px;width:1570.4px;height:1.2px;background:#e2e2e2"></div>
<div class="" style="left:1587.4px;top:450.65px;width:132.0999999999999px;height:1.2px;background:#e4e8ea"></div>
<div class="" style="left:1719.5px;top:450.65px;width:142.9000000000001px;height:1.2px;background:#cfe6d6"></div>
<div class="" style="left:17px;top:483.69999999999993px;width:1570.4px;height:1.2px;background:#e2e2e2"></div>
<div class="" style="left:1587.4px;top:483.69999999999993px;width:132.0999999999999px;height:1.2px;background:#e4e8ea"></div>
<div class="" style="left:1719.5px;top:483.69999999999993px;width:142.9000000000001px;height:1.2px;background:#cfe6d6"></div>
<div class="" style="left:17px;top:516.75px;width:1570.4px;height:1.2px;background:#e2e2e2"></div>
<div class="" style="left:1587.4px;top:516.75px;width:132.0999999999999px;height:1.2px;background:#e4e8ea"></div>
<div class="" style="left:1719.5px;top:516.75px;width:142.9000000000001px;height:1.2px;background:#cfe6d6"></div>
<div class="" style="left:17px;top:549.8px;width:1570.4px;height:1.2px;background:#e2e2e2"></div>
<div class="" style="left:1587.4px;top:549.8px;width:132.0999999999999px;height:1.2px;background:#e4e8ea"></div>
<div class="" style="left:1719.5px;top:549.8px;width:142.9000000000001px;height:1.2px;background:#cfe6d6"></div>
<div class="" style="left:17px;top:582.85px;width:1570.4px;height:1.2px;background:#e2e2e2"></div>
<div class="" style="left:1587.4px;top:582.85px;width:132.0999999999999px;height:1.2px;background:#e4e8ea"></div>
<div class="" style="left:1719.5px;top:582.85px;width:142.9000000000001px;height:1.2px;background:#cfe6d6"></div>
<div class="" style="left:17px;top:615.9px;width:1570.4px;height:1.2px;background:#e2e2e2"></div>
<div class="" style="left:1587.4px;top:615.9px;width:132.0999999999999px;height:1.2px;background:#e4e8ea"></div>
<div class="" style="left:1719.5px;top:615.9px;width:142.9000000000001px;height:1.2px;background:#cfe6d6"></div>
<div class="" style="left:17px;top:378.79999999999995px;width:1866px;height:1.2px;background:#e0e0e0"></div>
<div class="" style="left:17px;top:417.59999999999997px;width:1866px;height:1.2px;background:#dedede"></div>
<div class="" style="left:1106.9px;top:379.4px;width:1.2px;height:259.4px;background:#e2e2e2"></div>
<div class="" style="left:1214.9px;top:379.4px;width:1.2px;height:259.4px;background:#e2e2e2"></div>
<div class="" style="left:1346.7px;top:379.4px;width:1.2px;height:259.4px;background:#e2e2e2"></div>
<div class="" style="left:1490.7px;top:379.4px;width:1.2px;height:259.4px;background:#e2e2e2"></div>
<div class="" style="left:1586.8000000000002px;top:379.4px;width:1.2px;height:259.4px;background:#e2e2e2"></div>
<div class="" style="left:1718.9px;top:379.4px;width:1.2px;height:259.4px;background:#e2e2e2"></div>
<div class="" style="left:1850.9px;top:379.4px;width:1.2px;height:259.4px;background:#e2e2e2"></div>
<div class="" style="left:1718.9px;top:418.2px;width:1.2px;height:220.59999999999997px;background:#dde6e2"></div>
<div class="" style="left:1850.9px;top:418.2px;width:1.2px;height:220.59999999999997px;background:#cfe6d6"></div>
<div class="" style="left:1586.8000000000002px;top:418.2px;width:1.2px;height:220.59999999999997px;background:#e3e6ea"></div>
<div style="top:387.20px;font-size:18px;line-height:24px;color:#32363a;white-space:pre;transform:scaleY(0.965);left:1005px;transform-origin:0 18.00px;">BestandsRw</div>
<div style="top:387.20px;font-size:18px;line-height:24px;color:#32363a;white-space:pre;transform:scaleY(0.965);right:705.8px;text-align:right;transform-origin:100% 18.00px;">1.ZugRW</div>
<div style="top:387.20px;font-size:18px;line-height:24px;color:#32363a;white-space:pre;transform:scaleY(0.965);right:573.8px;text-align:right;transform-origin:100% 18.00px;">Frei verw.</div>
<div style="top:387.20px;font-size:18px;line-height:24px;color:#32363a;white-space:pre;transform:scaleY(0.965);right:429.79999999999995px;text-align:right;transform-origin:100% 18.00px;">Dispo.Best</div>
<div style="top:387.20px;font-size:18px;line-height:24px;color:#32363a;white-space:pre;transform:scaleY(0.965);left:1496.2px;transform-origin:0 18.00px;">Basis-ME</div>
<div style="top:387.20px;font-size:18px;line-height:24px;color:#32363a;white-space:pre;transform:scaleY(0.965);right:201.79999999999995px;text-align:right;transform-origin:100% 18.00px;">Rückstand</div>
<div style="top:387.20px;font-size:18px;line-height:24px;color:#32363a;white-space:pre;transform:scaleY(0.965);right:69.79999999999995px;text-align:right;transform-origin:100% 18.00px;">M 05/2025</div>
<div class="" style="left:1853.6px;top:383.4px;width:8.4px;height:30px;overflow:hidden"><div style="left:0;top:3.4px;font-size:18px;line-height:24px;transform:scaleY(0.965)">M</div></div>
<div style="top:422.75px;font-size:18px;line-height:24px;color:#32363a;white-space:pre;transform:scaleY(0.965);right:822.4000000000001px;text-align:right;transform-origin:100% 18.00px;">999,9</div>
<div style="top:422.75px;font-size:18px;line-height:24px;color:#32363a;white-space:pre;transform:scaleY(0.965);right:714.4000000000001px;text-align:right;transform-origin:100% 18.00px;">999,9</div>
<div style="top:422.75px;font-size:18px;line-height:24px;color:#32363a;white-space:pre;transform:scaleY(0.965);right:577.5999999999999px;text-align:right;transform-origin:100% 18.00px;"><u>0 </u></div>
<div style="top:422.75px;font-size:18px;line-height:24px;color:#32363a;white-space:pre;transform:scaleY(0.965);right:433.20000000000005px;text-align:right;transform-origin:100% 18.00px;"><u>0 </u></div>
<div style="top:422.75px;font-size:18px;line-height:24px;color:#32363a;white-space:pre;transform:scaleY(0.965);left:1496.2px;transform-origin:0 18.00px;">ST</div>
<div style="top:455.80px;font-size:18px;line-height:24px;color:#32363a;white-space:pre;transform:scaleY(0.965);right:822.4000000000001px;text-align:right;transform-origin:100% 18.00px;">999,9</div>
<div style="top:455.80px;font-size:18px;line-height:24px;color:#32363a;white-space:pre;transform:scaleY(0.965);right:714.4000000000001px;text-align:right;transform-origin:100% 18.00px;">999,9</div>
<div style="top:455.80px;font-size:18px;line-height:24px;color:#32363a;white-space:pre;transform:scaleY(0.965);right:577.5999999999999px;text-align:right;transform-origin:100% 18.00px;"><u>0 </u></div>
<div style="top:455.80px;font-size:18px;line-height:24px;color:#32363a;white-space:pre;transform:scaleY(0.965);right:433.20000000000005px;text-align:right;transform-origin:100% 18.00px;"><u>0 </u></div>
<div style="top:455.80px;font-size:18px;line-height:24px;color:#32363a;white-space:pre;transform:scaleY(0.965);left:1496.2px;transform-origin:0 18.00px;">ST</div>
<div style="top:488.85px;font-size:18px;line-height:24px;color:#32363a;white-space:pre;transform:scaleY(0.965);right:822.4000000000001px;text-align:right;transform-origin:100% 18.00px;">999,9</div>
<div style="top:488.85px;font-size:18px;line-height:24px;color:#32363a;white-space:pre;transform:scaleY(0.965);right:714.4000000000001px;text-align:right;transform-origin:100% 18.00px;">999,9</div>
<div style="top:488.85px;font-size:18px;line-height:24px;color:#32363a;white-space:pre;transform:scaleY(0.965);right:577.5999999999999px;text-align:right;transform-origin:100% 18.00px;"><u>0 </u></div>
<div style="top:488.85px;font-size:18px;line-height:24px;color:#32363a;white-space:pre;transform:scaleY(0.965);right:433.20000000000005px;text-align:right;transform-origin:100% 18.00px;"><u>0 </u></div>
<div style="top:488.85px;font-size:18px;line-height:24px;color:#32363a;white-space:pre;transform:scaleY(0.965);left:1496.2px;transform-origin:0 18.00px;">ST</div>
<div style="top:521.90px;font-size:18px;line-height:24px;color:#32363a;white-space:pre;transform:scaleY(0.965);right:817px;text-align:right;transform-origin:100% 18.00px;">54,0-</div>
<div style="top:521.90px;font-size:18px;line-height:24px;color:#32363a;white-space:pre;transform:scaleY(0.965);right:709px;text-align:right;transform-origin:100% 18.00px;">47,7-</div>
<div style="top:521.90px;font-size:18px;line-height:24px;color:#32363a;white-space:pre;transform:scaleY(0.965);right:577.5999999999999px;text-align:right;transform-origin:100% 18.00px;"><u>0 </u></div>
<div style="top:521.90px;font-size:18px;line-height:24px;color:#32363a;white-space:pre;transform:scaleY(0.965);right:433.20000000000005px;text-align:right;transform-origin:100% 18.00px;"><u>0 </u></div>
<div style="top:521.90px;font-size:18px;line-height:24px;color:#32363a;white-space:pre;transform:scaleY(0.965);left:1496.2px;transform-origin:0 18.00px;">ST</div>
<div style="top:521.90px;font-size:18px;line-height:24px;color:#32363a;white-space:pre;transform:scaleY(0.965);right:205px;text-align:right;transform-origin:100% 18.00px;"><u>266 </u></div>
<div style="top:521.90px;font-size:18px;line-height:24px;color:#32363a;white-space:pre;transform:scaleY(0.965);right:73px;text-align:right;transform-origin:100% 18.00px;"><u>97 </u></div>
<div class="" style="left:1853.6px;top:521.35px;width:4.6px;height:28px;overflow:hidden"><div style="left:0;top:1px;font-size:18px;line-height:24px"><u>8</u></div></div>
<div style="top:554.95px;font-size:18px;line-height:24px;color:#32363a;white-space:pre;transform:scaleY(0.965);right:817px;text-align:right;transform-origin:100% 18.00px;">65,0-</div>
<div style="top:554.95px;font-size:18px;line-height:24px;color:#32363a;white-space:pre;transform:scaleY(0.965);right:709px;text-align:right;transform-origin:100% 18.00px;">64,2-</div>
<div style="top:554.95px;font-size:18px;line-height:24px;color:#32363a;white-space:pre;transform:scaleY(0.965);right:577.5999999999999px;text-align:right;transform-origin:100% 18.00px;"><u>0 </u></div>
<div style="top:554.95px;font-size:18px;line-height:24px;color:#32363a;white-space:pre;transform:scaleY(0.965);right:433.20000000000005px;text-align:right;transform-origin:100% 18.00px;"><u>0 </u></div>
<div style="top:554.95px;font-size:18px;line-height:24px;color:#32363a;white-space:pre;transform:scaleY(0.965);left:1496.2px;transform-origin:0 18.00px;">ST</div>
<div style="top:554.95px;font-size:18px;line-height:24px;color:#32363a;white-space:pre;transform:scaleY(0.965);right:205px;text-align:right;transform-origin:100% 18.00px;"><u>266 </u></div>
<div style="top:554.95px;font-size:18px;line-height:24px;color:#32363a;white-space:pre;transform:scaleY(0.965);right:73px;text-align:right;transform-origin:100% 18.00px;"><u>323 </u></div>
<div class="" style="left:1853.6px;top:554.4px;width:4.6px;height:28px;overflow:hidden"><div style="left:0;top:1px;font-size:18px;line-height:24px"><u>8</u></div></div>
<div style="top:588.00px;font-size:18px;line-height:24px;color:#32363a;white-space:pre;transform:scaleY(0.965);right:817px;text-align:right;transform-origin:100% 18.00px;">66,0-</div>
<div style="top:588.00px;font-size:18px;line-height:24px;color:#32363a;white-space:pre;transform:scaleY(0.965);right:709px;text-align:right;transform-origin:100% 18.00px;">66,0-</div>
<div style="top:588.00px;font-size:18px;line-height:24px;color:#32363a;white-space:pre;transform:scaleY(0.965);right:577.5999999999999px;text-align:right;transform-origin:100% 18.00px;"><u>0 </u></div>
<div style="top:588.00px;font-size:18px;line-height:24px;color:#32363a;white-space:pre;transform:scaleY(0.965);right:433.20000000000005px;text-align:right;transform-origin:100% 18.00px;"><u>0 </u></div>
<div style="top:588.00px;font-size:18px;line-height:24px;color:#32363a;white-space:pre;transform:scaleY(0.965);left:1496.2px;transform-origin:0 18.00px;">ST</div>
<div style="top:588.00px;font-size:18px;line-height:24px;color:#32363a;white-space:pre;transform:scaleY(0.965);right:205px;text-align:right;transform-origin:100% 18.00px;"><u>324 </u></div>
<div style="top:588.00px;font-size:18px;line-height:24px;color:#32363a;white-space:pre;transform:scaleY(0.965);right:73px;text-align:right;transform-origin:100% 18.00px;"><u>95 </u></div>
<div style="top:621.05px;font-size:18px;line-height:24px;color:#32363a;white-space:pre;transform:scaleY(0.965);right:817px;text-align:right;transform-origin:100% 18.00px;">5,0-</div>
<div style="top:621.05px;font-size:18px;line-height:24px;color:#32363a;white-space:pre;transform:scaleY(0.965);right:714.4000000000001px;text-align:right;transform-origin:100% 18.00px;">87,7</div>
<div style="top:621.05px;font-size:18px;line-height:24px;color:#32363a;white-space:pre;transform:scaleY(0.965);right:582.5999999999999px;text-align:right;transform-origin:100% 18.00px;">0</div>
<div style="top:621.05px;font-size:18px;line-height:24px;color:#32363a;white-space:pre;transform:scaleY(0.965);right:438.20000000000005px;text-align:right;transform-origin:100% 18.00px;">0</div>
<div style="top:621.05px;font-size:18px;line-height:24px;color:#32363a;white-space:pre;transform:scaleY(0.965);left:1496.2px;transform-origin:0 18.00px;">ST</div>
<div style="top:621.05px;font-size:18px;line-height:24px;color:#32363a;white-space:pre;transform:scaleY(0.965);right:210px;text-align:right;transform-origin:100% 18.00px;">324</div>
<div style="top:621.05px;font-size:18px;line-height:24px;color:#32363a;white-space:pre;transform:scaleY(0.965);right:78px;text-align:right;transform-origin:100% 18.00px;">324</div>
<div class="" style="left:17px;top:638.8px;width:1866px;height:20px;background:#fff;border-top:1.2px solid #dcdcdc;border-bottom:1.2px solid #e0e0e0"></div>
<div class="" style="left:1862.4px;top:418.2px;width:18.4px;height:220.59999999999997px;background:#fff;border-left:1.2px solid #e4e4e4"></div>
<div class="" style="left:1880.8px;top:418.2px;width:2.6px;height:220.59999999999997px;background:#f2f2f2"></div>
<div class="" style="left:1862.4px;top:638.8px;width:21px;height:20px;background:#f2f2f2;border-left:1.2px solid #e4e4e4"></div>
<svg style="left:1872.4px;top:426px" width="1" height="1"><path d="M-3.6 2 L0 -2 L3.6 2" fill="none" stroke="#0854a0" stroke-width="1.5" stroke-linecap="round" stroke-linejoin="round"/></svg>
<svg style="left:1872.4px;top:441.6px" width="1" height="1"><path d="M-3.6 -2 L0 2 L3.6 -2" fill="none" stroke="#0854a0" stroke-width="1.5" stroke-linecap="round" stroke-linejoin="round"/></svg>
<svg style="left:1872.4px;top:614.8px" width="1" height="1"><path d="M-3.6 2 L0 -2 L3.6 2" fill="none" stroke="#0854a0" stroke-width="1.5" stroke-linecap="round" stroke-linejoin="round"/></svg>
<svg style="left:1872.4px;top:630.4px" width="1" height="1"><path d="M-3.6 -2 L0 2 L3.6 -2" fill="none" stroke="#0854a0" stroke-width="1.5" stroke-linecap="round" stroke-linejoin="round"/></svg>
<div class="" style="left:1865.2px;top:577.4px;width:14.8px;height:29.2px;background:#8c8c8c"></div>
<svg style="left:1836.8px;top:649px" width="1" height="1"><path d="M2 -3.6 L-2 0 L2 3.6" fill="none" stroke="#0854a0" stroke-width="1.5" stroke-linecap="round" stroke-linejoin="round"/></svg>
<svg style="left:1852.6px;top:649px" width="1" height="1"><path d="M-2 -3.6 L2 0 L-2 3.6" fill="none" stroke="#0854a0" stroke-width="1.5" stroke-linecap="round" stroke-linejoin="round"/></svg>
<div class="" style="left:1882.6px;top:380px;width:1.5px;height:29.4px;background:#0854a0"></div>
<div class="" style="left:1863.6px;top:433.6px;width:17px;height:1px;background:#ececec"></div>
<div class="" style="left:1863.6px;top:450.6px;width:17px;height:1px;background:#ececec"></div>
<div class="" style="left:1863.6px;top:606.8px;width:17px;height:1px;background:#ececec"></div>
<div class="" style="left:1863.6px;top:622.4px;width:17px;height:1px;background:#ececec"></div>
<div class="" style="left:182.5px;top:265.8px;width:1.5px;height:1.2px;background:#8a8a8a"></div>
<div class="" style="left:264px;top:265.8px;width:1.5px;height:1.2px;background:#8a8a8a"></div>
<div class="" style="left:278.8px;top:265.8px;width:1.5px;height:1.2px;background:#8a8a8a"></div>
<div class="" style="left:674px;top:265.8px;width:1.5px;height:1.2px;background:#8a8a8a"></div>
<div class="" style="left:1164px;top:265.8px;width:1.5px;height:1.2px;background:#8a8a8a"></div>
<div class="" style="left:1225.2px;top:698.6px;width:1.6px;height:1.0px;background:#555"></div>
<div class="" style="left:1244.4px;top:698.6px;width:1.6px;height:1.0px;background:#555"></div>
<div class="" style="left:1282.7px;top:698.6px;width:1.6px;height:1.0px;background:#555"></div>
<div class="" style="left:1299.5px;top:698.6px;width:1.6px;height:1.0px;background:#555"></div>
<div class="" style="left:1337.8px;top:698.6px;width:1.6px;height:1.0px;background:#555"></div>
<div class="" style="left:1354.6px;top:698.6px;width:1.6px;height:1.0px;background:#555"></div>
<div class="" style="left:1385.7px;top:698.6px;width:1.6px;height:1.0px;background:#555"></div>
<div class="" style="left:1404.9px;top:698.6px;width:1.6px;height:1.0px;background:#555"></div>
<div class="" style="left:1747.5px;top:698.6px;width:1.6px;height:1.0px;background:#555"></div>
<div class="" style="left:1764px;top:698.6px;width:1.6px;height:1.0px;background:#555"></div>
<div class="" style="left:1769px;top:698.6px;width:1.6px;height:1.0px;background:#555"></div>
<div class="" style="left:25px;top:425.4px;width:3px;height:17px;background:#9aa7c7;border-radius:1px"></div>
<div class="" style="left:25px;top:458.45px;width:3px;height:17px;background:#9aa7c7;border-radius:1px"></div>
<div class="" style="left:25px;top:491.49999999999994px;width:3px;height:17px;background:#9aa7c7;border-radius:1px"></div>
<div class="" style="left:25px;top:524.5500000000001px;width:3px;height:17px;background:#9aa7c7;border-radius:1px"></div>
<div class="" style="left:25px;top:557.6px;width:3px;height:17px;background:#9aa7c7;border-radius:1px"></div>
<div class="" style="left:25px;top:590.6500000000001px;width:3px;height:17px;background:#9aa7c7;border-radius:1px"></div>
<div class="" style="left:25px;top:623.7px;width:3px;height:17px;background:#9aa7c7;border-radius:1px"></div>
<div class="" style="left:24.4px;top:391.6px;width:4px;height:5.8px;background:#0854a0;border-radius:1.2px"></div>
<div class="" style="left:24.4px;top:401.6px;width:4px;height:6.2px;background:#0854a0;border-radius:1.2px"></div>
<div style="top:666.80px;font-size:18px;line-height:24px;color:#32363a;white-space:pre;transform:scaleY(1.0);left:16.2px;transform-origin:0 18.00px;">1</div>
<div class="" style="left:16.6px;top:690px;width:12px;height:9.9px;overflow:hidden"><div style="left:0;top:2.2px;font-size:18px;line-height:24px">2</div></div>
<div class="" style="left:17px;top:638.8px;width:20px;height:20px;background:#f3f3f3;border-top:1.2px solid #dcdcdc;border-bottom:1.2px solid #e0e0e0"></div>
<div class="" style="left:17.2px;top:710px;width:1885.6px;height:7.8px;background:#ebecee"></div>
<div class="" style="left:1869.6px;top:699.5px;width:15.2px;height:1.2px;background:#8c8c8c"></div>
<div style="top:726.00px;font-size:24.07px;line-height:24px;color:#6a6d70;white-space:pre;transform:scaleY(0.99);-webkit-text-stroke:0.1px;left:18px;transform-origin:0 20.00px;">Bedarfs-/Bestandsliste für Material GB-SP-K400-02 Werk 1010 Dispoberei</div>
<div class="b" style="left:18px;top:765.2px;width:32px;height:32.5px;"></div>
<svg style="left:18px;top:765.2px" width="32" height="32" viewBox="0 0 32 32"><rect x="7.3" y="9.2" width="17.4" height="16.6" fill="none" stroke="#0854a0" stroke-width="1.5" stroke-linecap="round" stroke-linejoin="round" /><path d="M12.8 14.2 L19.6 21 M19.6 14.2 L12.8 21" fill="none" stroke="#0854a0" stroke-width="2.1" stroke-linecap="round" stroke-linejoin="round" /></svg>
<div class="b" style="left:60.2px;top:765.2px;width:32px;height:32.5px;"></div>
<svg style="left:60.2px;top:765.2px" width="32" height="32" viewBox="0 0 32 32"><path d="M6.6 15.6 A9.2 9.2 0 0 1 24.2 13.6" fill="none" stroke="#0854a0" stroke-width="1.4" stroke-linecap="round" stroke-linejoin="round" /><path d="M24.6 19 A9.2 9.2 0 0 1 7 21" fill="none" stroke="#0854a0" stroke-width="1.4" stroke-linecap="round" stroke-linejoin="round" /><path d="M20.6 13.9 L24.7 13.9 L24.7 9.8" fill="none" stroke="#0854a0" stroke-width="1.4" stroke-linecap="round" stroke-linejoin="round" /><path d="M10.6 20.7 L6.5 20.7 L6.5 24.8" fill="none" stroke="#0854a0" stroke-width="1.4" stroke-linecap="round" stroke-linejoin="round" /></svg>
<div class="b" style="left:102.2px;top:765.2px;width:32px;height:32.5px;"></div>
<svg style="left:102.2px;top:765.2px" width="32" height="32" viewBox="0 0 32 32"><circle cx="13" cy="16.1" r="5.9" fill="none" stroke="#0854a0" stroke-width="1.5" stroke-linecap="round" stroke-linejoin="round" /><path d="M17.8 20.5 L24 24.9" fill="none" stroke="#0854a0" stroke-width="2.6" stroke-linecap="round" stroke-linejoin="round" /><path d="M10.3 16.4 L12.5 18.5 L16.1 14" fill="none" stroke="#0854a0" stroke-width="1.6" stroke-linecap="round" stroke-linejoin="round" /></svg>
<div class="" style="left:143.9px;top:765.2px;width:1px;height:32.5px;background:#d9d9d9"></div>
<div class="b" style="left:155.2px;top:765.2px;width:32px;height:32.5px;"></div>
<svg style="left:155.2px;top:765.2px" width="32" height="32" viewBox="0 0 32 32"><path d="M12.5 12.5h7 M10.1 16.1h11.8 M8.3 19.6h15.4 M6.4 23.2h19.2" fill="none" stroke="#0854a0" stroke-width="1.1" stroke-linecap="round" stroke-linejoin="round" /></svg>
<div class="b" style="left:197px;top:765.2px;width:32px;height:32.5px;"></div>
<svg style="left:197px;top:765.2px" width="32" height="32" viewBox="0 0 32 32"><path d="M6.6 12.5h18.8 M8.6 16.1h14.8 M10.5 19.6h11 M12.4 23.2h7.2" fill="none" stroke="#0854a0" stroke-width="1.1" stroke-linecap="round" stroke-linejoin="round" /></svg>
<div class="b" style="left:239.2px;top:765.2px;width:32px;height:32.5px;"></div>
<svg style="left:239.2px;top:765.2px" width="32" height="32" viewBox="0 0 32 32"><circle cx="12.9" cy="15.7" r="5.8" fill="none" stroke="#0854a0" stroke-width="1.5" stroke-linecap="round" stroke-linejoin="round" /><path d="M17.6 20.2 L24 25.1" fill="none" stroke="#0854a0" stroke-width="2.6" stroke-linecap="round" stroke-linejoin="round" /></svg>
<div class="bd" style="left:281.2px;top:765.2px;width:32px;height:32.5px;"></div>
<svg style="left:281.2px;top:765.2px" width="32" height="32" viewBox="0 0 32 32"><circle cx="11.3" cy="17.1" r="4.9" fill="none" stroke="#6d99cc" stroke-width="1.4" stroke-linecap="round" stroke-linejoin="round" /><path d="M15.2 20.7 L20.9 24.9" fill="none" stroke="#6d99cc" stroke-width="2.3" stroke-linecap="round" stroke-linejoin="round" /><path d="M18.2 11.1h6.4 M21.4 7.9v6.4" fill="none" stroke="#6d99cc" stroke-width="1.3" stroke-linecap="round" stroke-linejoin="round" /></svg>
<div class="b" style="left:323px;top:765.2px;width:64px;height:32.5px;"></div>
<div class="" style="left:354.6px;top:765.2px;width:1.3px;height:32.5px;background:#0854a0"></div>
<svg style="left:323px;top:765.2px" width="32" height="32" viewBox="0 0 32 32"><path d="M7.2 9.5 H24.6 L18 18.6 V22.6 L14 25.3 V18.6 Z" fill="none" stroke="#0854a0" stroke-width="1.5" stroke-linecap="round" stroke-linejoin="round" /></svg>
<svg style="left:355px;top:765.2px" width="32" height="32" viewBox="0 0 32 32"><path d="M8.5 15 L16 21.6 L23.5 15" fill="none" stroke="#0854a0" stroke-width="1.5" stroke-linecap="round" stroke-linejoin="round" /></svg>
<div class="" style="left:396.9px;top:765.2px;width:1px;height:32.5px;background:#d9d9d9"></div>
<div class="b" style="left:407.6px;top:765.2px;width:64px;height:32.5px;"></div>
<div class="" style="left:439.8px;top:765.2px;width:1.3px;height:32.5px;background:#0854a0"></div>
<svg style="left:407.6px;top:765.2px" width="32" height="32" viewBox="0 0 32 32"><path d="M20 13 V11.2 H11 L16 17.3 L11 23.5 H20.4 V21.6" fill="none" stroke="#0854a0" stroke-width="1.5" stroke-linecap="round" stroke-linejoin="round" /></svg>
<svg style="left:439.6px;top:765.2px" width="32" height="32" viewBox="0 0 32 32"><path d="M8.5 15 L16 21.6 L23.5 15" fill="none" stroke="#0854a0" stroke-width="1.5" stroke-linecap="round" stroke-linejoin="round" /></svg>
<div class="bd" style="left:482px;top:765.2px;width:64px;height:32.5px;"></div>
<div class="" style="left:513.6px;top:765.2px;width:1.3px;height:32.5px;background:#9bbbe0"></div>
<svg style="left:482px;top:765.2px" width="32" height="32" viewBox="0 0 32 32"><path d="M12.8 9.5 V8.5 H7 L10 12.3 L7 16 H13 V15" fill="none" stroke="#6d99cc" stroke-width="1.1" stroke-linecap="round" stroke-linejoin="round" /><path d="M10.5 23.6 L22.4 11.2" fill="none" stroke="#6d99cc" stroke-width="1.3" stroke-linecap="round" stroke-linejoin="round" /><path d="M24.8 19.2 V18.2 H19 L22 21.7 L19 25.3 H25 V24.3" fill="none" stroke="#6d99cc" stroke-width="1.1" stroke-linecap="round" stroke-linejoin="round" /></svg>
<svg style="left:514px;top:765.2px" width="32" height="32" viewBox="0 0 32 32"><path d="M8.5 15 L16 21.6 L23.5 15" fill="none" stroke="#6d99cc" stroke-width="1.5" stroke-linecap="round" stroke-linejoin="round" /></svg>
<div class="" style="left:556.1px;top:765.2px;width:1px;height:32.5px;background:#d9d9d9"></div>
<div class="b" style="left:567px;top:765.2px;width:32px;height:32.5px;"></div>
<svg style="left:567px;top:765.2px" width="32" height="32" viewBox="0 0 32 32"><path d="M10.4 12.3 V8 H21.5 V12.3" fill="none" stroke="#0854a0" stroke-width="1.4" stroke-linecap="round" stroke-linejoin="round" /><path d="M10.4 21 H8 Q6.3 21 6.3 19.3 V14 Q6.3 12.3 8 12.3 H23.6 Q25.3 12.3 25.3 14 V19.3 Q25.3 21 23.6 21 H21.8" fill="none" stroke="#0854a0" stroke-width="1.4" stroke-linecap="round" stroke-linejoin="round" /><path d="M10.4 17.2 H21.8 V26.2 H10.4 Z" fill="#fff" stroke="#0854a0" stroke-width="1.4" stroke-linejoin="round"/><path d="M13.2 20.4h6 M13.2 23.2h6 M21 14.8h2.2" fill="none" stroke="#0854a0" stroke-width="1.2" stroke-linecap="round" stroke-linejoin="round" /></svg>
<div class="b" style="left:609px;top:765.2px;width:58px;height:32.5px;"></div>
<svg style="left:609px;top:765.2px" width="32" height="32" viewBox="0 0 32 32"><path d="M16.5 26.2 H7.7 V7.5 H22 V16.5" fill="none" stroke="#0854a0" stroke-width="1.4" stroke-linecap="round" stroke-linejoin="round" /><path d="M10.8 11.2h8.2 M10.8 14.8h8.2 M10.8 18.4h3.6 M10.8 22h3" fill="none" stroke="#0854a0" stroke-width="1.2" stroke-linecap="round" stroke-linejoin="round" /><circle cx="19.2" cy="21.2" r="3.3" fill="none" stroke="#0854a0" stroke-width="1.3" stroke-linecap="round" stroke-linejoin="round" /><path d="M21.7 23.8 L24.6 26.6" fill="none" stroke="#0854a0" stroke-width="1.6" stroke-linecap="round" stroke-linejoin="round" /></svg>
<svg style="left:635px;top:765.2px" width="32" height="32" viewBox="0 0 32 32"><path d="M8.5 15 L16 21.6 L23.5 15" fill="none" stroke="#0854a0" stroke-width="1.5" stroke-linecap="round" stroke-linejoin="round" /></svg>
<div class="b" style="left:677px;top:765.2px;width:58px;height:32.5px;"></div>
<svg style="left:677px;top:765.2px" width="32" height="32" viewBox="0 0 32 32"><path d="M17.4 11 V7.5 H6.6 V21.8 H9.5" fill="none" stroke="#0854a0" stroke-width="1.4" stroke-linecap="round" stroke-linejoin="round" /><path d="M14.4 15 V11.8 H24.4 V25.5 H14.4 V22.5" fill="none" stroke="#0854a0" stroke-width="1.4" stroke-linecap="round" stroke-linejoin="round" /><path d="M9.8 18.8 H19.4 M16.4 15.6 L19.6 18.8 L16.4 22" fill="none" stroke="#0854a0" stroke-width="1.4" stroke-linecap="round" stroke-linejoin="round" /></svg>
<svg style="left:703px;top:765.2px" width="32" height="32" viewBox="0 0 32 32"><path d="M8.5 15 L16 21.6 L23.5 15" fill="none" stroke="#0854a0" stroke-width="1.5" stroke-linecap="round" stroke-linejoin="round" /></svg>
<div class="" style="left:745.1px;top:765.2px;width:1px;height:32.5px;background:#d9d9d9"></div>
<div class="b" style="left:756px;top:765.2px;width:64px;height:32.5px;"></div>
<div class="" style="left:787.6px;top:765.2px;width:1.3px;height:32.5px;background:#0854a0"></div>
<svg style="left:756px;top:765.2px" width="32" height="32" viewBox="0 0 32 32"><path d="M9.3 8.3 H24" fill="none" stroke="#0854a0" stroke-width="1.1" stroke-linecap="round" stroke-linejoin="round" stroke-dasharray='2.2 1.4'/><path d="M6.9 10.5 V24.5" fill="none" stroke="#0854a0" stroke-width="1.1" stroke-linecap="round" stroke-linejoin="round" stroke-dasharray='2.2 1.4'/><path d="M9.3 10.6 H24.2 V24.6 H9.3 Z M14.2 10.6 V24.6 M19.2 10.6 V24.6 M9.3 15.2 H24.2 M9.3 19.9 H24.2" fill="none" stroke="#0854a0" stroke-width="1.75" stroke-linecap="round" stroke-linejoin="round" /></svg>
<svg style="left:788px;top:765.2px" width="32" height="32" viewBox="0 0 32 32"><path d="M8.5 15 L16 21.6 L23.5 15" fill="none" stroke="#0854a0" stroke-width="1.5" stroke-linecap="round" stroke-linejoin="round" /></svg>
<div class="" style="left:829.9px;top:765.2px;width:1px;height:32.5px;background:#d9d9d9"></div>
<div class="b" style="left:841px;top:765.2px;width:32px;height:32.5px;"></div>
<svg style="left:841px;top:765.2px" width="32" height="32" viewBox="0 0 32 32"><path d="M15.95 6.6 L24.7 10.6 V21.6 L15.95 26.2 L7.1 21.8 V11.4 Z" fill="#0854a0"/><path d="M10.2 11.3 L15.9 8.5 L21.6 10.8 L16 13.6 Z" fill="#fff"/><path d="M12.2 10.3 L18 12.7 M14.1 9.4 L19.9 11.7 M13 12.6 L18.8 9.6" stroke="#0854a0" stroke-width="0.9"/><path d="M7.4 12 L16 15.4 L24.5 11.2" fill="none" stroke="#fff" stroke-width="0.7"/><circle cx="11.4" cy="17" r="1.8" fill="#fff"/><path d="M8.8 22.6 Q8.8 19.4 11.6 19.6 Q14.4 19.8 14.4 25 Z" fill="#fff"/><path d="M18.6 16.4 L22.8 14.4 V18.6 L21.4 20.8 L18.6 21.4 Z" fill="#fff"/></svg>
<div class="" style="left:883.1px;top:765.2px;width:1px;height:32.5px;background:#d9d9d9"></div>
<div class="bd" style="left:894px;top:765.2px;width:95px;height:32.5px;"></div>
<svg style="left:894px;top:765.2px" width="32" height="32" viewBox="0 0 32 32"><rect x="7.1" y="9.3" width="16.7" height="17.6" rx="0.8" fill="none" stroke="#6d99cc" stroke-width="1.3" stroke-linecap="round" stroke-linejoin="round" /><rect x="7.1" y="9.3" width="16.7" height="2.6" fill="#6d99cc"/><path d="M11.1 7.3 V10.4 M19.9 7.3 V10.4" fill="none" stroke="#6d99cc" stroke-width="1.4" stroke-linecap="round" stroke-linejoin="round" /><circle cx="10.6" cy="15.6" r="1.3" fill="#6d99cc"/><circle cx="10.6" cy="20.5" r="1.3" fill="#6d99cc"/><circle cx="15.45" cy="15.6" r="1.3" fill="#6d99cc"/><circle cx="15.45" cy="20.5" r="1.3" fill="#6d99cc"/><circle cx="20.3" cy="15.6" r="1.3" fill="#6d99cc"/><circle cx="20.3" cy="20.5" r="1.3" fill="#6d99cc"/></svg>
<div style="top:768.20px;font-size:17.6px;line-height:24px;color:#6d99cc;white-space:pre;transform:scaleY(1.03);left:926px;transform-origin:0 18.00px;">BV ein</div>
<div class="" style="left:999.1px;top:765.2px;width:1px;height:32.5px;background:#d9d9d9"></div>
<div class="b" style="left:1010px;top:765.2px;width:70px;height:32.5px;"></div>
<svg style="left:1010px;top:765.2px" width="32" height="32" viewBox="0 0 32 32"><rect x="7.1" y="9.3" width="16.7" height="17.6" rx="0.8" fill="none" stroke="#0854a0" stroke-width="1.3" stroke-linecap="round" stroke-linejoin="round" /><rect x="7.1" y="9.3" width="16.7" height="2.6" fill="#0854a0"/><path d="M11.1 7.3 V10.4 M19.9 7.3 V10.4" fill="none" stroke="#0854a0" stroke-width="1.4" stroke-linecap="round" stroke-linejoin="round" /><circle cx="10.6" cy="15.6" r="1.3" fill="#0854a0"/><circle cx="10.6" cy="20.5" r="1.3" fill="#0854a0"/><circle cx="15.45" cy="15.6" r="1.3" fill="#0854a0"/><circle cx="15.45" cy="20.5" r="1.3" fill="#0854a0"/><circle cx="20.3" cy="15.6" r="1.3" fill="#0854a0"/><circle cx="20.3" cy="20.5" r="1.3" fill="#0854a0"/></svg>
<div style="top:768.50px;font-size:17.5px;line-height:24px;color:#0854a0;white-space:pre;transform:scaleY(1.03);left:1041.8px;transform-origin:0 18.00px;letter-spacing:-1.2px;">WE</div>
<div class="" style="left:1090.1px;top:765.2px;width:1px;height:32.5px;background:#d9d9d9"></div>
<div class="bd" style="left:1101px;top:765.2px;width:74px;height:32.5px;"></div>
<svg style="left:1101px;top:765.2px" width="32" height="32" viewBox="0 0 32 32"><path d="M12.5 12.5h7 M10.1 16.1h11.8 M8.3 19.6h15.4 M6.4 23.2h19.2" fill="none" stroke="#6d99cc" stroke-width="1.1" stroke-linecap="round" stroke-linejoin="round" /></svg>
<div style="top:768.20px;font-size:17.6px;line-height:24px;color:#6d99cc;white-space:pre;transform:scaleY(1.03);left:1133px;transform-origin:0 18.00px;">Dat.</div>
<div class="" style="left:1185.1px;top:765.2px;width:1px;height:32.5px;background:#d9d9d9"></div>
<div class="b" style="left:1196px;top:765.2px;width:151px;height:32.5px;"></div>
<svg style="left:1201.6px;top:771.6px" width="20" height="20" viewBox="0 0 20 20"><circle cx="10" cy="10" r="8.6" fill="none" stroke="#0854a0" stroke-width="1.4" stroke-linecap="round" stroke-linejoin="round" /><path d="M10 5 V10.6 H15.4" fill="none" stroke="#0854a0" stroke-width="1.4" stroke-linecap="round" stroke-linejoin="round" /></svg>
<div style="top:768.20px;font-size:17.68px;line-height:24px;color:#0854a0;white-space:pre;transform:scaleY(1.03);left:1228px;transform-origin:0 18.00px;">umterminieren</div>
<div class="" style="left:17.0px;top:805.2px;width:1885.6px;height:217.0px;background:#f2f2f2;border:1.2px solid #dcdcdc;border-left-color:#ececec"></div>
<div class="" style="left:18.2px;top:806.4000000000001px;width:34.199999999999996px;height:37.899999999999906px;background:#fff"></div>
<div class="" style="left:52.4px;top:844.3px;width:1100.0px;height:32.940000000000055px;background:#f7f7f7"></div>
<div class="" style="left:18.0px;top:844.3px;width:34.4px;height:32.940000000000055px;background:#f2f2f2"></div>
<div class="" style="left:52.4px;top:877.24px;width:1100.0px;height:32.93999999999994px;background:#e5f0fa"></div>
<div class="" style="left:18.0px;top:877.24px;width:34.4px;height:32.93999999999994px;background:#e5f0fa"></div>
<div class="" style="left:52.4px;top:910.18px;width:1100.0px;height:32.93999999999994px;background:#ededed"></div>
<div class="" style="left:18.0px;top:910.18px;width:34.4px;height:32.93999999999994px;background:#f2f2f2"></div>
<div class="" style="left:52.4px;top:943.1199999999999px;width:1100.0px;height:32.940000000000055px;background:#f2f2f2"></div>
<div class="" style="left:18.0px;top:943.1199999999999px;width:34.4px;height:32.940000000000055px;background:#ededed"></div>
<div class="" style="left:52.4px;top:976.06px;width:1100.0px;height:32.940000000000055px;background:#ededed"></div>
<div class="" style="left:18.0px;top:976.06px;width:34.4px;height:32.940000000000055px;background:#f2f2f2"></div>
<div class="" style="left:52.4px;top:1009.0px;width:1100.0px;height:13.200000000000045px;background:#f2f2f2"></div>
<div class="" style="left:18.0px;top:1009.0px;width:34.4px;height:13.200000000000045px;background:#ededed"></div>
<div class="" style="left:18.0px;top:942.5199999999999px;width:1134.4px;height:1.2px;background:#e2e2e2"></div>
<div class="" style="left:18.0px;top:975.4599999999999px;width:1134.4px;height:1.2px;background:#e2e2e2"></div>
<div class="" style="left:18.0px;top:1008.4px;width:1134.4px;height:1.2px;background:#e2e2e2"></div>
<div class="" style="left:17.0px;top:843.6999999999999px;width:1885.6px;height:1.2px;background:#dcdcdc"></div>
<div class="" style="left:197.1px;top:806.2px;width:1.2px;height:216.0px;background:#dedede"></div>
<div class="" style="left:294.0px;top:806.2px;width:1.2px;height:216.0px;background:#dedede"></div>
<div class="" style="left:363.9px;top:806.2px;width:1.2px;height:216.0px;background:#dedede"></div>
<div class="" style="left:568.8px;top:806.2px;width:1.2px;height:216.0px;background:#dedede"></div>
<div class="" style="left:665.9px;top:806.2px;width:1.2px;height:216.0px;background:#dedede"></div>
<div class="" style="left:711.8px;top:806.2px;width:1.2px;height:216.0px;background:#dedede"></div>
<div class="" style="left:760.8px;top:806.2px;width:1.2px;height:216.0px;background:#dedede"></div>
<div class="" style="left:860.9px;top:806.2px;width:1.2px;height:216.0px;background:#dedede"></div>
<div class="" style="left:963.9px;top:806.2px;width:1.2px;height:216.0px;background:#dedede"></div>
<div class="" style="left:1010.9px;top:806.2px;width:1.2px;height:216.0px;background:#dedede"></div>
<div class="" style="left:1090.0px;top:806.2px;width:1.2px;height:216.0px;background:#dedede"></div>
<div class="" style="left:1151.8000000000002px;top:806.2px;width:1.2px;height:216.0px;background:#dedede"></div>
<div class="" style="left:51.6px;top:805.8000000000001px;width:1.6px;height:216.4px;background:#5a5e62"></div>
<div class="" style="left:17.0px;top:877.64px;width:1136.2px;height:33.3px;border:1.4px solid #0854a0"></div>
<svg style="left:25.2px;top:817.2px" width="22" height="22" viewBox="0 0 22 22"><rect x="0.2" y="0.2" width="7.4" height="6.6" rx="1.4" fill="#0854a0"/><rect x="9.8" y="0.2" width="7.4" height="6.6" rx="1.4" fill="#0854a0"/><rect x="0.2" y="10" width="7.4" height="6.6" rx="1.4" fill="#0854a0"/><path d="M10.6 9.4 L19 13.8 L15.8 14.8 L17.6 18.2 L16 19 L14.2 15.6 L11.8 17.8 Z" fill="#fff" stroke="#0854a0" stroke-width="1.1" stroke-linejoin="round"/></svg>
<div style="top:812.10px;font-size:17.82px;line-height:24px;color:#32363a;white-space:pre;transform:scaleY(0.965);left:57.9px;transform-origin:0 18.00px;">Zusatzfunktionen</div>
<div style="top:812.10px;font-size:17.82px;line-height:24px;color:#32363a;white-space:pre;transform:scaleY(0.965);left:202.3px;transform-origin:0 18.00px;">Datum</div>
<div style="top:812.10px;font-size:17.82px;line-height:24px;color:#32363a;white-space:pre;transform:scaleY(0.965);left:299.5px;transform-origin:0 18.00px;">Dispoel.</div>
<div style="top:812.10px;font-size:17.82px;line-height:24px;color:#32363a;white-space:pre;transform:scaleY(0.965);left:368.9px;transform-origin:0 18.00px;">Daten zum Dispoelement</div>
<div style="top:812.10px;font-size:17.82px;line-height:24px;color:#32363a;white-space:pre;transform:scaleY(0.965);left:574.8px;transform-origin:0 18.00px;">Um.Dat.</div>
<div style="top:812.10px;font-size:17.82px;line-height:24px;color:#32363a;white-space:pre;transform:scaleY(0.965);left:671.4px;transform-origin:0 18.00px;">Gew</div>
<div style="top:812.10px;font-size:17.82px;line-height:24px;color:#32363a;white-space:pre;transform:scaleY(0.965);left:717.4px;transform-origin:0 18.00px;">Ausn</div>
<div style="top:812.10px;font-size:17.82px;line-height:24px;color:#32363a;white-space:pre;transform:scaleY(0.965);right:1059.6px;text-align:right;transform-origin:100% 18.00px;">Zug/Bedarf</div>
<div style="top:812.10px;font-size:17.82px;line-height:24px;color:#32363a;white-space:pre;transform:scaleY(0.965);right:956.6px;text-align:right;transform-origin:100% 18.00px;">Verf.Menge</div>
<div style="top:812.10px;font-size:17.82px;line-height:24px;color:#32363a;white-space:pre;transform:scaleY(0.965);left:969.4px;transform-origin:0 18.00px;">LOrt</div>
<div style="top:812.10px;font-size:17.82px;line-height:24px;color:#32363a;white-space:pre;transform:scaleY(0.965);left:1016.4px;transform-origin:0 18.00px;">Lieferant</div>
<div style="top:812.10px;font-size:17.82px;line-height:24px;color:#32363a;white-space:pre;transform:scaleY(0.965);left:1095.4px;transform-origin:0 18.00px;">Kunde</div>
<div style="left:25.9px;top:851.7px;width:17.8px;height:17.8px;background:#fff;border:1.9px solid #868e96;border-radius:1.5px;"></div>
<div class="b" style="left:53.3px;top:844.4px;width:144.6px;height:33.2px;"></div>
<svg style="left:108.8px;top:844.0999999999999px" width="30" height="30" viewBox="0 0 30 30"><circle cx="14.3" cy="17.7" r="6.4" fill="none" stroke="#0854a0" stroke-width="1.35" stroke-linecap="round" stroke-linejoin="round" /><path d="M19.4 22.4 L24.4 26.9" fill="none" stroke="#0854a0" stroke-width="2.3" stroke-linecap="round" stroke-linejoin="round" /><path d="M10.9 17.8 L13.1 20 L17.4 14.9" fill="none" stroke="#0854a0" stroke-width="1.35" stroke-linecap="round" stroke-linejoin="round" /></svg>
<div style="top:849.90px;font-size:18px;line-height:24px;color:#32363a;white-space:pre;transform:scaleY(1);left:201.8px;transform-origin:0 18.00px;">19.05.2025</div>
<div style="top:849.90px;font-size:18px;line-height:24px;color:#32363a;white-space:pre;transform:scaleY(1);left:299.2px;transform-origin:0 18.00px;">BStand</div>
<div style="top:849.90px;font-size:18px;line-height:24px;color:#32363a;white-space:pre;transform:scaleY(1);left:369.0px;transform-origin:0 18.00px;"></div>
<div style="top:849.90px;font-size:17.75px;line-height:24px;color:#32363a;white-space:pre;transform:scaleY(1);left:575.2px;transform-origin:0 18.00px;"></div>
<svg style="left:671.8px;top:850.9px" width="14" height="20" viewBox="0 0 14 20"><path d="M4.9 8.6 V5.8 H8.7 V8.6 Q12.2 10.6 12.2 14 Q12.2 18.4 6.8 18.4 Q1.4 18.4 1.4 14 Q1.4 10.6 4.9 8.6 Z" fill="#fff" stroke="#0854a0" stroke-width="1.25"/><path d="M4.9 3.6 H8.7 M5.4 1.2 H8.2" stroke="#0854a0" stroke-width="1.3"/></svg>
<div style="top:849.90px;font-size:17.9px;line-height:24px;color:#32363a;white-space:pre;transform:scaleY(1);right:1067.8px;text-align:right;transform-origin:100% 18.00px;"></div>
<div style="top:849.90px;font-size:17.9px;line-height:24px;color:#32363a;white-space:pre;transform:scaleY(1);right:964.8px;text-align:right;transform-origin:100% 18.00px;"></div>
<div style="top:849.90px;font-size:17.9px;line-height:24px;color:#32363a;white-space:pre;transform:scaleY(1);left:969.4px;transform-origin:0 18.00px;"></div>
<div style="left:25.9px;top:884.6px;width:17.8px;height:17.8px;background:#fff;border:1.9px solid #868e96;border-radius:1.5px;"></div>
<svg style="left:26px;top:884.84px" width="18" height="18" viewBox="0 0 18 18"><path d="M4.2 9.4 L7.4 12.8 L13.6 4.8" fill="none" stroke="#0854a0" stroke-width="1.9" stroke-linecap="round" stroke-linejoin="round"/></svg>
<div class="b" style="left:53.3px;top:877.34px;width:144.6px;height:33.2px;"></div>
<svg style="left:108.8px;top:877.04px" width="30" height="30" viewBox="0 0 30 30"><circle cx="14.3" cy="17.7" r="6.4" fill="none" stroke="#0854a0" stroke-width="1.35" stroke-linecap="round" stroke-linejoin="round" /><path d="M19.4 22.4 L24.4 26.9" fill="none" stroke="#0854a0" stroke-width="2.3" stroke-linecap="round" stroke-linejoin="round" /><path d="M10.9 17.8 L13.1 20 L17.4 14.9" fill="none" stroke="#0854a0" stroke-width="1.35" stroke-linecap="round" stroke-linejoin="round" /></svg>
<div style="top:882.84px;font-size:18px;line-height:24px;color:#32363a;white-space:pre;transform:scaleY(1);left:201.8px;transform-origin:0 18.00px;">13.03.2025</div>
<div style="top:882.84px;font-size:18px;line-height:24px;color:#32363a;white-space:pre;transform:scaleY(1);left:299.2px;transform-origin:0 18.00px;">Fe-Auf</div>
<div style="top:882.84px;font-size:18px;line-height:24px;color:#32363a;white-space:pre;transform:scaleY(1);left:369.0px;transform-origin:0 18.00px;">000001072911/PP01/FR</div>
<div style="top:882.84px;font-size:17.75px;line-height:24px;color:#32363a;white-space:pre;transform:scaleY(1);left:575.2px;transform-origin:0 18.00px;">19.05.2025</div>
<svg style="left:669.6px;top:885.74px" width="17" height="17" viewBox="0 0 17 17"><g transform="scale(1.045)"><path d="M4.7 0.3 H11.3 L15.7 4.7 V11.3 L11.3 15.7 H4.7 L0.3 11.3 V4.7 Z" fill="#c00000" stroke="#fff" stroke-width="1.1"/><text x="8" y="9.5" font-family="Liberation Sans" font-weight="bold" font-size="4.2" fill="#fff" text-anchor="middle" textLength="10.6" lengthAdjust="spacingAndGlyphs">STOP</text></g></svg>
<div style="top:882.84px;font-size:18px;line-height:24px;color:#32363a;white-space:pre;transform:scaleY(1);left:717.4px;transform-origin:0 18.00px;"><u>15</u></div>
<div style="top:882.84px;font-size:17.9px;line-height:24px;color:#32363a;white-space:pre;transform:scaleY(1);right:1067.8px;text-align:right;transform-origin:100% 18.00px;">400</div>
<div style="top:882.84px;font-size:17.9px;line-height:24px;color:#32363a;white-space:pre;transform:scaleY(1);right:964.8px;text-align:right;transform-origin:100% 18.00px;">400</div>
<div style="top:882.84px;font-size:17.9px;line-height:24px;color:#32363a;white-space:pre;transform:scaleY(1);left:969.4px;transform-origin:0 18.00px;">0200</div>
<div style="left:25.9px;top:917.6px;width:17.8px;height:17.8px;background:#fff;border:1.9px solid #868e96;border-radius:1.5px;"></div>
<div class="b" style="left:53.3px;top:910.28px;width:144.6px;height:33.2px;"></div>
<svg style="left:108.8px;top:909.9799999999999px" width="30" height="30" viewBox="0 0 30 30"><circle cx="14.3" cy="17.7" r="6.4" fill="none" stroke="#0854a0" stroke-width="1.35" stroke-linecap="round" stroke-linejoin="round" /><path d="M19.4 22.4 L24.4 26.9" fill="none" stroke="#0854a0" stroke-width="2.3" stroke-linecap="round" stroke-linejoin="round" /><path d="M10.9 17.8 L13.1 20 L17.4 14.9" fill="none" stroke="#0854a0" stroke-width="1.35" stroke-linecap="round" stroke-linejoin="round" /></svg>
<div style="top:915.78px;font-size:18px;line-height:24px;color:#32363a;white-space:pre;transform:scaleY(1);left:201.8px;transform-origin:0 18.00px;">26.03.2025</div>
<div style="top:915.78px;font-size:18px;line-height:24px;color:#32363a;white-space:pre;transform:scaleY(1);left:299.2px;transform-origin:0 18.00px;">Fe-Auf</div>
<div style="top:915.78px;font-size:18px;line-height:24px;color:#32363a;white-space:pre;transform:scaleY(1);left:369.0px;transform-origin:0 18.00px;">000001073303/PP01/FR</div>
<div style="top:915.78px;font-size:17.75px;line-height:24px;color:#32363a;white-space:pre;transform:scaleY(1);left:575.2px;transform-origin:0 18.00px;">19.05.2025</div>
<svg style="left:669.6px;top:918.68px" width="17" height="17" viewBox="0 0 17 17"><g transform="scale(1.045)"><path d="M4.7 0.3 H11.3 L15.7 4.7 V11.3 L11.3 15.7 H4.7 L0.3 11.3 V4.7 Z" fill="#c00000" stroke="#fff" stroke-width="1.1"/><text x="8" y="9.5" font-family="Liberation Sans" font-weight="bold" font-size="4.2" fill="#fff" text-anchor="middle" textLength="10.6" lengthAdjust="spacingAndGlyphs">STOP</text></g></svg>
<div style="top:915.78px;font-size:18px;line-height:24px;color:#32363a;white-space:pre;transform:scaleY(1);left:717.4px;transform-origin:0 18.00px;"><u>15</u></div>
<div style="top:915.78px;font-size:17.9px;line-height:24px;color:#32363a;white-space:pre;transform:scaleY(1);right:1067.8px;text-align:right;transform-origin:100% 18.00px;">10</div>
<div style="top:915.78px;font-size:17.9px;line-height:24px;color:#32363a;white-space:pre;transform:scaleY(1);right:964.8px;text-align:right;transform-origin:100% 18.00px;">410</div>
<div style="top:915.78px;font-size:17.9px;line-height:24px;color:#32363a;white-space:pre;transform:scaleY(1);left:969.4px;transform-origin:0 18.00px;">0200</div>
<div style="left:25.9px;top:950.5px;width:17.8px;height:17.8px;background:#fff;border:1.9px solid #868e96;border-radius:1.5px;"></div>
<div class="b" style="left:53.3px;top:943.2199999999999px;width:144.6px;height:33.2px;"></div>
<svg style="left:108.8px;top:942.9199999999998px" width="30" height="30" viewBox="0 0 30 30"><circle cx="14.3" cy="17.7" r="6.4" fill="none" stroke="#0854a0" stroke-width="1.35" stroke-linecap="round" stroke-linejoin="round" /><path d="M19.4 22.4 L24.4 26.9" fill="none" stroke="#0854a0" stroke-width="2.3" stroke-linecap="round" stroke-linejoin="round" /><path d="M10.9 17.8 L13.1 20 L17.4 14.9" fill="none" stroke="#0854a0" stroke-width="1.35" stroke-linecap="round" stroke-linejoin="round" /></svg>
<div style="top:948.72px;font-size:18px;line-height:24px;color:#32363a;white-space:pre;transform:scaleY(1);left:201.8px;transform-origin:0 18.00px;">26.03.2025</div>
<div style="top:948.72px;font-size:18px;line-height:24px;color:#32363a;white-space:pre;transform:scaleY(1);left:299.2px;transform-origin:0 18.00px;">Fe-Auf</div>
<div style="top:948.72px;font-size:18px;line-height:24px;color:#32363a;white-space:pre;transform:scaleY(1);left:369.0px;transform-origin:0 18.00px;">000001073304/PP01/FR</div>
<div style="top:948.72px;font-size:17.75px;line-height:24px;color:#32363a;white-space:pre;transform:scaleY(1);left:575.2px;transform-origin:0 18.00px;">19.05.2025</div>
<svg style="left:669.6px;top:951.6199999999999px" width="17" height="17" viewBox="0 0 17 17"><g transform="scale(1.045)"><path d="M4.7 0.3 H11.3 L15.7 4.7 V11.3 L11.3 15.7 H4.7 L0.3 11.3 V4.7 Z" fill="#c00000" stroke="#fff" stroke-width="1.1"/><text x="8" y="9.5" font-family="Liberation Sans" font-weight="bold" font-size="4.2" fill="#fff" text-anchor="middle" textLength="10.6" lengthAdjust="spacingAndGlyphs">STOP</text></g></svg>
<div style="top:948.72px;font-size:18px;line-height:24px;color:#32363a;white-space:pre;transform:scaleY(1);left:717.4px;transform-origin:0 18.00px;"><u>15</u></div>
<div style="top:948.72px;font-size:17.9px;line-height:24px;color:#32363a;white-space:pre;transform:scaleY(1);right:1067.8px;text-align:right;transform-origin:100% 18.00px;">10</div>
<div style="top:948.72px;font-size:17.9px;line-height:24px;color:#32363a;white-space:pre;transform:scaleY(1);right:964.8px;text-align:right;transform-origin:100% 18.00px;">420</div>
<div style="top:948.72px;font-size:17.9px;line-height:24px;color:#32363a;white-space:pre;transform:scaleY(1);left:969.4px;transform-origin:0 18.00px;">0200</div>
<div style="left:25.9px;top:983.5px;width:17.8px;height:17.8px;background:#fff;border:1.9px solid #868e96;border-radius:1.5px;"></div>
<div class="b" style="left:53.3px;top:976.16px;width:144.6px;height:33.2px;"></div>
<svg style="left:108.8px;top:975.8599999999999px" width="30" height="30" viewBox="0 0 30 30"><circle cx="14.3" cy="17.7" r="6.4" fill="none" stroke="#0854a0" stroke-width="1.35" stroke-linecap="round" stroke-linejoin="round" /><path d="M19.4 22.4 L24.4 26.9" fill="none" stroke="#0854a0" stroke-width="2.3" stroke-linecap="round" stroke-linejoin="round" /><path d="M10.9 17.8 L13.1 20 L17.4 14.9" fill="none" stroke="#0854a0" stroke-width="1.35" stroke-linecap="round" stroke-linejoin="round" /></svg>
<div style="top:981.66px;font-size:18px;line-height:24px;color:#32363a;white-space:pre;transform:scaleY(1);left:201.8px;transform-origin:0 18.00px;">26.03.2025</div>
<div style="top:981.66px;font-size:18px;line-height:24px;color:#32363a;white-space:pre;transform:scaleY(1);left:299.2px;transform-origin:0 18.00px;">Fe-Auf</div>
<div style="top:981.66px;font-size:18px;line-height:24px;color:#32363a;white-space:pre;transform:scaleY(1);left:369.0px;transform-origin:0 18.00px;">000001073305/PP01/FR</div>
<div style="top:981.66px;font-size:17.75px;line-height:24px;color:#32363a;white-space:pre;transform:scaleY(1);left:575.2px;transform-origin:0 18.00px;">19.05.2025</div>
<svg style="left:669.6px;top:984.56px" width="17" height="17" viewBox="0 0 17 17"><g transform="scale(1.045)"><path d="M4.7 0.3 H11.3 L15.7 4.7 V11.3 L11.3 15.7 H4.7 L0.3 11.3 V4.7 Z" fill="#c00000" stroke="#fff" stroke-width="1.1"/><text x="8" y="9.5" font-family="Liberation Sans" font-weight="bold" font-size="4.2" fill="#fff" text-anchor="middle" textLength="10.6" lengthAdjust="spacingAndGlyphs">STOP</text></g></svg>
<div style="top:981.66px;font-size:18px;line-height:24px;color:#32363a;white-space:pre;transform:scaleY(1);left:717.4px;transform-origin:0 18.00px;"><u>15</u></div>
<div style="top:981.66px;font-size:17.9px;line-height:24px;color:#32363a;white-space:pre;transform:scaleY(1);right:1067.8px;text-align:right;transform-origin:100% 18.00px;">10</div>
<div style="top:981.66px;font-size:17.9px;line-height:24px;color:#32363a;white-space:pre;transform:scaleY(1);right:964.8px;text-align:right;transform-origin:100% 18.00px;">430</div>
<div style="top:981.66px;font-size:17.9px;line-height:24px;color:#32363a;white-space:pre;transform:scaleY(1);left:969.4px;transform-origin:0 18.00px;">0200</div>
<div style="left:25.9px;top:1016.4px;width:17.8px;height:17.8px;background:#fff;border:1.9px solid #868e96;border-radius:1.5px;"></div>
<div class="b" style="left:53.3px;top:1009.1px;width:144.6px;height:33.2px;"></div>
<svg style="left:108.8px;top:1008.8px" width="30" height="30" viewBox="0 0 30 30"><circle cx="14.3" cy="17.7" r="6.4" fill="none" stroke="#0854a0" stroke-width="1.35" stroke-linecap="round" stroke-linejoin="round" /><path d="M19.4 22.4 L24.4 26.9" fill="none" stroke="#0854a0" stroke-width="2.3" stroke-linecap="round" stroke-linejoin="round" /><path d="M10.9 17.8 L13.1 20 L17.4 14.9" fill="none" stroke="#0854a0" stroke-width="1.35" stroke-linecap="round" stroke-linejoin="round" /></svg>
<div style="top:1014.60px;font-size:18px;line-height:24px;color:#32363a;white-space:pre;transform:scaleY(1);left:201.8px;transform-origin:0 18.00px;">26.04.2025</div>
<div style="top:1014.60px;font-size:18px;line-height:24px;color:#32363a;white-space:pre;transform:scaleY(1);left:299.2px;transform-origin:0 18.00px;">Fe-Auf</div>
<div style="top:1014.60px;font-size:18px;line-height:24px;color:#32363a;white-space:pre;transform:scaleY(1);left:369.0px;transform-origin:0 18.00px;">000001073306/PP01/FR</div>
<div style="top:1014.60px;font-size:17.75px;line-height:24px;color:#32363a;white-space:pre;transform:scaleY(1);left:575.2px;transform-origin:0 18.00px;">19.05.2025</div>
<svg style="left:669.6px;top:1017.5px" width="17" height="17" viewBox="0 0 17 17"><g transform="scale(1.045)"><path d="M4.7 0.3 H11.3 L15.7 4.7 V11.3 L11.3 15.7 H4.7 L0.3 11.3 V4.7 Z" fill="#c00000" stroke="#fff" stroke-width="1.1"/><text x="8" y="9.5" font-family="Liberation Sans" font-weight="bold" font-size="4.2" fill="#fff" text-anchor="middle" textLength="10.6" lengthAdjust="spacingAndGlyphs">STOP</text></g></svg>
<div style="top:1014.60px;font-size:18px;line-height:24px;color:#32363a;white-space:pre;transform:scaleY(1);left:717.4px;transform-origin:0 18.00px;"><u>15</u></div>
<div style="top:1014.60px;font-size:17.9px;line-height:24px;color:#32363a;white-space:pre;transform:scaleY(1);right:1067.8px;text-align:right;transform-origin:100% 18.00px;">10</div>
<div style="top:1014.60px;font-size:17.9px;line-height:24px;color:#32363a;white-space:pre;transform:scaleY(1);right:964.8px;text-align:right;transform-origin:100% 18.00px;">440</div>
<div style="top:1014.60px;font-size:17.9px;line-height:24px;color:#32363a;white-space:pre;transform:scaleY(1);left:969.4px;transform-origin:0 18.00px;">0200</div>
<div class="" style="left:0px;top:1022.2px;width:1920px;height:60px;background:#f7f7f7"></div>
<div class="" style="left:17.0px;top:1021.6px;width:1885.6px;height:1.2px;background:#dcdcdc"></div>
<div class="" style="left:1882.8px;top:844.9px;width:19px;height:176.7000000000001px;background:#fff;border-left:1.2px solid #e4e4e4"></div>
<svg style="left:1892.2px;top:851.8px" width="1" height="1"><path d="M-3.6 2 L0 -2 L3.6 2" fill="none" stroke="#0854a0" stroke-width="1.5" stroke-linecap="round" stroke-linejoin="round"/></svg>
<svg style="left:1892.2px;top:867.4px" width="1" height="1"><path d="M-3.6 -2 L0 2 L3.6 -2" fill="none" stroke="#0854a0" stroke-width="1.5" stroke-linecap="round" stroke-linejoin="round"/></svg>
<svg style="left:1892.2px;top:996.8px" width="1" height="1"><path d="M-3.6 2 L0 -2 L3.6 2" fill="none" stroke="#0854a0" stroke-width="1.5" stroke-linecap="round" stroke-linejoin="round"/></svg>
<svg style="left:1892.2px;top:1012.4px" width="1" height="1"><path d="M-3.6 -2 L0 2 L3.6 -2" fill="none" stroke="#0854a0" stroke-width="1.5" stroke-linecap="round" stroke-linejoin="round"/></svg>
<div class="" style="left:1885px;top:877.4px;width:15px;height:29.4px;background:#8c8c8c"></div>
<svg style="left:17.5px;top:1038.75px" width="18.125" height="18.75" viewBox="120 140 290 300"><path d="M132 152 H385 V265 H335 V203 H228 L303 290 L228 377 H335 V320 H385 V426 H132 V372 L212 290 L132 208 Z" fill="#84b414" stroke="#1c2600" stroke-width="17" stroke-linejoin="miter"/><path d="M150 172 H362 M150 190 L238 290 L150 392" fill="none" stroke="#b7dc55" stroke-width="9" opacity="0.8"/></svg>
<div style="top:1029.90px;font-size:18.05px;line-height:24px;color:#32363a;white-space:pre;transform:scaleY(0.965);left:42.7px;transform-origin:0 18.00px;">Datensätze selektiert: 19</div>
<svg style="left:585px;top:1040.2px" width="18.2" height="16.6" viewBox="0 0 18.2 16.6"><defs><linearGradient id="rg" x1="0" y1="0" x2="0.6" y2="1"><stop offset="0" stop-color="#ff1a1a"/><stop offset="0.6" stop-color="#e60008"/><stop offset="1" stop-color="#8e0006"/></linearGradient></defs><rect x="0.8" y="0.8" width="16.6" height="15" rx="2.2" fill="url(#rg)" stroke="#2e1416" stroke-width="1.5"/><path d="M11.4 2.6 L6.2 7 L8.6 7.4 L4.6 10.4 L6.6 10.8 L4.2 13.6 L12.6 9.6 L10.2 9.2 L13 6.6 L10.4 6.2 Z" fill="#fff"/></svg>
<div style="top:1029.90px;font-size:18px;line-height:24px;color:#32363a;white-space:pre;transform:scaleY(0.965);left:609px;transform-origin:0 18.00px;">Vork. Zustände: 002</div>
<svg style="left:965px;top:1039px" width="20" height="20" viewBox="0 0 20 20"><circle cx="9.6" cy="9.4" r="7.7" fill="#fff" stroke="#26282b" stroke-width="1.7"/><path d="M9.6 4.4 V9.6 M7.6 9.6 H13.6" fill="none" stroke="#111" stroke-width="1.5"/></svg>
<div style="top:1029.90px;font-size:18.25px;line-height:24px;color:#32363a;white-space:pre;transform:scaleY(0.965);left:990px;transform-origin:0 18.00px;">19.05.2025,11:34:14</div>
<svg style="left:1344.8px;top:1038.9px" width="20" height="19" viewBox="0 0 20 19"><rect x="0.8" y="0.9" width="17.6" height="16.4" fill="#0808ee" stroke="#141414" stroke-width="1.6"/><path d="M2 2.4 H17" stroke="#5a8cff" stroke-width="0.9"/><text x="9.7" y="15" font-family="Liberation Serif" font-weight="bold" font-size="16.5" fill="#fff" text-anchor="middle">i</text></svg>
<div style="top:1029.90px;font-size:18.1px;line-height:24px;color:#32363a;white-space:pre;transform:scaleY(0.965);left:1370px;transform-origin:0 18.00px;">Werk: 1010 Dispobereich: 1010</div>
<div class="" style="left:9.2px;top:1079.8px;width:1902px;height:50.9px;background:#fff;border:1.3px solid #89919a;border-radius:6px"></div>
<div class="" style="left:1650px;top:1088.4px;width:76px;height:34.4px;background:#0a6ed1;border-radius:5px"></div>
<div style="top:1093.40px;font-size:17.35px;line-height:24px;color:#fff;white-space:pre;transform:scaleY(1.04);left:1656.2px;transform-origin:0 18.00px;font-weight:bold;-webkit-text-stroke:0;">Sichern</div>
<div style="top:1093.40px;font-size:17.7px;line-height:24px;color:#0854a0;white-space:pre;transform:scaleY(1.02);left:1741.8px;transform-origin:0 18.00px;">Enter</div>
<div style="top:1093.40px;font-size:17.7px;line-height:24px;color:#0854a0;white-space:pre;transform:scaleY(1.02);left:1806px;transform-origin:0 18.00px;">Abbrechen</div>
<div class="" style="left:27.4px;top:304px;width:973.7px;height:423.9px;background:#fff;border:1.3px solid #6f8fb4;box-shadow:0 0 3px rgba(0,0,0,0.15)"></div>
<div class="" style="left:27.4px;top:354.6px;width:973.7px;height:1.3px;background:#6f8fb4"></div>
<div class="" style="left:27.4px;top:675.6px;width:973.7px;height:1.3px;background:#7f8a96"></div>
<div class="" style="left:43.8px;top:325.6px;width:20.4px;height:2.8px;background:#0854a0;border-radius:1.4px"></div>
<div class="" style="left:43.8px;top:331.4px;width:20.4px;height:2.8px;background:#0854a0;border-radius:1.4px"></div>
<div class="" style="left:43.8px;top:337.2px;width:20.4px;height:2.8px;background:#0854a0;border-radius:1.4px"></div>
<div style="top:320.20px;font-size:19.95px;line-height:24px;color:#32363a;white-space:pre;transform:scaleY(1.06);left:13.5px;width:1000px;text-align:center;transform-origin:50% 19.00px;-webkit-text-stroke:0.1px;">FQ0(1)/200 Belegzeilen: Meldungen anzeigen</div>
<svg style="left:964px;top:324px" width="18" height="18" viewBox="0 0 18 18"><path d="M2.6 2.6 L14.4 14.4 M14.4 2.6 L2.6 14.4" fill="none" stroke="#0854a0" stroke-width="2.7" stroke-linecap="round"/></svg>
<div class="" style="left:48px;top:376.3px;width:7px;height:0.95px;background:#2a2a2a"></div>
<div class="" style="left:48px;top:376.3px;width:0.95px;height:7px;background:#2a2a2a"></div>
<div class="" style="left:973px;top:376.3px;width:7px;height:0.95px;background:#2a2a2a"></div>
<div class="" style="left:979.05px;top:376.3px;width:0.95px;height:7px;background:#2a2a2a"></div>
<div class="" style="left:48px;top:655.05px;width:7px;height:0.95px;background:#2a2a2a"></div>
<div class="" style="left:48px;top:649px;width:0.95px;height:7px;background:#2a2a2a"></div>
<div class="" style="left:973px;top:655.05px;width:7px;height:0.95px;background:#2a2a2a"></div>
<div class="" style="left:979.05px;top:649px;width:0.95px;height:7px;background:#2a2a2a"></div>
<div class="b" style="left:54px;top:402.2px;width:32px;height:32.5px;"></div>
<svg style="left:54px;top:402.2px" width="32" height="32" viewBox="0 0 32 32"><circle cx="10.5" cy="19.6" r="3.5" fill="none" stroke="#0854a0" stroke-width="1.4" stroke-linecap="round" stroke-linejoin="round" /><circle cx="21.2" cy="19.6" r="3.5" fill="none" stroke="#0854a0" stroke-width="1.4" stroke-linecap="round" stroke-linejoin="round" /><path d="M14 19.2 Q15.85 17.6 17.7 19.2 M7.1 18.6 L10 11.4 Q10.6 10 12.4 10.6 M24.6 18.6 L21.7 11.4 Q21.1 10 19.3 10.6" fill="none" stroke="#0854a0" stroke-width="1.4" stroke-linecap="round" stroke-linejoin="round" /></svg>
<div class="" style="left:95.7px;top:402.2px;width:1px;height:32.5px;background:#d9d9d9"></div>
<div class="b" style="left:107px;top:402.2px;width:32px;height:32.5px;"></div>
<svg style="left:107px;top:402.2px" width="32" height="32" viewBox="0 0 32 32"><path d="M12.5 12.5h7 M10.1 16.1h11.8 M8.3 19.6h15.4 M6.4 23.2h19.2" fill="none" stroke="#0854a0" stroke-width="1.1" stroke-linecap="round" stroke-linejoin="round" /></svg>
<div class="b" style="left:149px;top:402.2px;width:32px;height:32.5px;"></div>
<svg style="left:149px;top:402.2px" width="32" height="32" viewBox="0 0 32 32"><path d="M6.6 12.5h18.8 M8.6 16.1h14.8 M10.5 19.6h11 M12.4 23.2h7.2" fill="none" stroke="#0854a0" stroke-width="1.1" stroke-linecap="round" stroke-linejoin="round" /></svg>
<div class="b" style="left:191px;top:402.2px;width:32px;height:32.5px;"></div>
<svg style="left:191px;top:402.2px" width="32" height="32" viewBox="0 0 32 32"><circle cx="12.9" cy="15.7" r="5.8" fill="none" stroke="#0854a0" stroke-width="1.5" stroke-linecap="round" stroke-linejoin="round" /><path d="M17.6 20.2 L24 25.1" fill="none" stroke="#0854a0" stroke-width="2.6" stroke-linecap="round" stroke-linejoin="round" /></svg>
<div class="bd" style="left:233.2px;top:402.2px;width:32px;height:32.5px;"></div>
<svg style="left:233.2px;top:402.2px" width="32" height="32" viewBox="0 0 32 32"><circle cx="11.3" cy="17.1" r="4.9" fill="none" stroke="#6d99cc" stroke-width="1.4" stroke-linecap="round" stroke-linejoin="round" /><path d="M15.2 20.7 L20.9 24.9" fill="none" stroke="#6d99cc" stroke-width="2.3" stroke-linecap="round" stroke-linejoin="round" /><path d="M18.2 11.1h6.4 M21.4 7.9v6.4" fill="none" stroke="#6d99cc" stroke-width="1.3" stroke-linecap="round" stroke-linejoin="round" /></svg>
<div class="b" style="left:275px;top:402.2px;width:64px;height:32.5px;"></div>
<div class="" style="left:306.6px;top:402.2px;width:1.3px;height:32.5px;background:#0854a0"></div>
<svg style="left:275px;top:402.2px" width="32" height="32" viewBox="0 0 32 32"><path d="M7.2 9.5 H24.6 L18 18.6 V22.6 L14 25.3 V18.6 Z" fill="none" stroke="#0854a0" stroke-width="1.5" stroke-linecap="round" stroke-linejoin="round" /></svg>
<svg style="left:307px;top:402.2px" width="32" height="32" viewBox="0 0 32 32"><path d="M8.5 15 L16 21.6 L23.5 15" fill="none" stroke="#0854a0" stroke-width="1.5" stroke-linecap="round" stroke-linejoin="round" /></svg>
<div class="" style="left:348.9px;top:402.2px;width:1px;height:32.5px;background:#d9d9d9"></div>
<div class="b" style="left:360px;top:402.2px;width:32px;height:32.5px;"></div>
<svg style="left:360px;top:402.2px" width="32" height="32" viewBox="0 0 32 32"><path d="M10.4 12.3 V8 H21.5 V12.3" fill="none" stroke="#0854a0" stroke-width="1.4" stroke-linecap="round" stroke-linejoin="round" /><path d="M10.4 21 H8 Q6.3 21 6.3 19.3 V14 Q6.3 12.3 8 12.3 H23.6 Q25.3 12.3 25.3 14 V19.3 Q25.3 21 23.6 21 H21.8" fill="none" stroke="#0854a0" stroke-width="1.4" stroke-linecap="round" stroke-linejoin="round" /><path d="M10.4 17.2 H21.8 V26.2 H10.4 Z" fill="#fff" stroke="#0854a0" stroke-width="1.4" stroke-linejoin="round"/><path d="M13.2 20.4h6 M13.2 23.2h6 M21 14.8h2.2" fill="none" stroke="#0854a0" stroke-width="1.2" stroke-linecap="round" stroke-linejoin="round" /></svg>
<div class="b" style="left:402.2px;top:402.2px;width:58px;height:32.5px;"></div>
<svg style="left:402.2px;top:402.2px" width="32" height="32" viewBox="0 0 32 32"><path d="M16.5 26.2 H7.7 V7.5 H22 V16.5" fill="none" stroke="#0854a0" stroke-width="1.4" stroke-linecap="round" stroke-linejoin="round" /><path d="M10.8 11.2h8.2 M10.8 14.8h8.2 M10.8 18.4h3.6 M10.8 22h3" fill="none" stroke="#0854a0" stroke-width="1.2" stroke-linecap="round" stroke-linejoin="round" /><circle cx="19.2" cy="21.2" r="3.3" fill="none" stroke="#0854a0" stroke-width="1.3" stroke-linecap="round" stroke-linejoin="round" /><path d="M21.7 23.8 L24.6 26.6" fill="none" stroke="#0854a0" stroke-width="1.6" stroke-linecap="round" stroke-linejoin="round" /></svg>
<svg style="left:428.2px;top:402.2px" width="32" height="32" viewBox="0 0 32 32"><path d="M8.5 15 L16 21.6 L23.5 15" fill="none" stroke="#0854a0" stroke-width="1.5" stroke-linecap="round" stroke-linejoin="round" /></svg>
<div class="b" style="left:470.2px;top:402.2px;width:58px;height:32.5px;"></div>
<svg style="left:470.2px;top:402.2px" width="32" height="32" viewBox="0 0 32 32"><path d="M17.4 11 V7.5 H6.6 V21.8 H9.5" fill="none" stroke="#0854a0" stroke-width="1.4" stroke-linecap="round" stroke-linejoin="round" /><path d="M14.4 15 V11.8 H24.4 V25.5 H14.4 V22.5" fill="none" stroke="#0854a0" stroke-width="1.4" stroke-linecap="round" stroke-linejoin="round" /><path d="M9.8 18.8 H19.4 M16.4 15.6 L19.6 18.8 L16.4 22" fill="none" stroke="#0854a0" stroke-width="1.4" stroke-linecap="round" stroke-linejoin="round" /></svg>
<svg style="left:496.2px;top:402.2px" width="32" height="32" viewBox="0 0 32 32"><path d="M8.5 15 L16 21.6 L23.5 15" fill="none" stroke="#0854a0" stroke-width="1.5" stroke-linecap="round" stroke-linejoin="round" /></svg>
<div class="" style="left:537.9px;top:402.2px;width:1px;height:32.5px;background:#d9d9d9"></div>
<div class="b" style="left:549.4px;top:402.2px;width:64px;height:32.5px;"></div>
<div class="" style="left:581.0px;top:402.2px;width:1.3px;height:32.5px;background:#0854a0"></div>
<svg style="left:549.4px;top:402.2px" width="32" height="32" viewBox="0 0 32 32"><path d="M9.3 8.3 H24" fill="none" stroke="#0854a0" stroke-width="1.1" stroke-linecap="round" stroke-linejoin="round" stroke-dasharray='2.2 1.4'/><path d="M6.9 10.5 V24.5" fill="none" stroke="#0854a0" stroke-width="1.1" stroke-linecap="round" stroke-linejoin="round" stroke-dasharray='2.2 1.4'/><path d="M9.3 10.6 H24.2 V24.6 H9.3 Z M14.2 10.6 V24.6 M19.2 10.6 V24.6 M9.3 15.2 H24.2 M9.3 19.9 H24.2" fill="none" stroke="#0854a0" stroke-width="1.75" stroke-linecap="round" stroke-linejoin="round" /></svg>
<svg style="left:581.4px;top:402.2px" width="32" height="32" viewBox="0 0 32 32"><path d="M8.5 15 L16 21.6 L23.5 15" fill="none" stroke="#0854a0" stroke-width="1.5" stroke-linecap="round" stroke-linejoin="round" /></svg>
<div class="" style="left:54.2px;top:451.0px;width:885.4px;height:185.3px;background:#f2f2f2;border:1.2px solid #dadada"></div>
<div class="" style="left:54.2px;top:489.8px;width:885.4px;height:1.2px;background:#dadada"></div>
<div class="" style="left:393.2px;top:451.0px;width:1.2px;height:39.6px;background:#dadada"></div>
<div class="" style="left:130.6px;top:451.0px;width:1.2px;height:39.6px;background:#dadada"></div>
<div class="" style="left:93.8px;top:451.0px;width:1.6px;height:39.6px;background:#6a6d70"></div>
<div style="top:458.60px;font-size:18px;line-height:24px;color:#32363a;white-space:pre;transform:scaleY(0.965);left:60.6px;transform-origin:0 18.00px;">Typ</div>
<div style="top:458.60px;font-size:17.8px;line-height:24px;color:#32363a;white-space:pre;transform:scaleY(0.965);left:99.2px;transform-origin:0 18.00px;">Pos</div>
<div style="top:458.60px;font-size:17.55px;line-height:24px;color:#32363a;white-space:pre;transform:scaleY(0.965);left:136.4px;transform-origin:0 18.00px;">Meldungstext</div>
<div class="" style="left:54.2px;top:491px;width:339.8px;height:32.6px;background:#e5f0fa;border:1.4px solid #0854a0"></div>
<div class="" style="left:55.4px;top:492.2px;width:38.6px;height:30.2px;background:#d3e3f5"></div>
<div class="" style="left:93.8px;top:491px;width:1.6px;height:32.6px;background:#5f7590"></div>
<div class="" style="left:130.6px;top:492.2px;width:1.2px;height:30.2px;background:#c9d9ea"></div>
<div class="" style="left:67.6px;top:499.6px;width:14.8px;height:14.8px;background:#c00000;border-radius:50%;border:0.8px solid #fff"></div>
<div style="top:495.80px;font-size:17.9px;line-height:24px;color:#32363a;white-space:pre;transform:scaleY(1);left:99.2px;transform-origin:0 18.00px;">001</div>
<div style="top:495.80px;font-size:17.75px;line-height:24px;color:#32363a;white-space:pre;transform:scaleY(1);left:136.4px;transform-origin:0 18.00px;">S:/GIB/DCO:000</div>
<svg style="left:583px;top:692.6px" width="20" height="18" viewBox="0 0 20 18"><path d="M1.8 9.6 L6.8 15.2 L17.6 2" fill="none" stroke="#107e3e" stroke-width="3.3" stroke-linejoin="miter"/></svg>
<svg style="left:625px;top:692px" width="22" height="20" viewBox="0 0 22 20"><circle cx="10.7" cy="9.7" r="8.8" fill="none" stroke="#0854a0" stroke-width="1.3"/><text x="10.7" y="15.2" font-family="Liberation Sans" font-weight="bold" font-size="14.5" fill="#0854a0" text-anchor="middle">?</text></svg>
<svg style="left:668.8px;top:695px" width="20" height="16" viewBox="0 0 20 16"><circle cx="4.4" cy="10" r="3.5" fill="none" stroke="#0854a0" stroke-width="1.4" stroke-linecap="round" stroke-linejoin="round" /><circle cx="15" cy="10" r="3.5" fill="none" stroke="#0854a0" stroke-width="1.4" stroke-linecap="round" stroke-linejoin="round" /><path d="M7.9 9.6 Q9.7 8 11.5 9.6 M1 9 L3.9 1.8 Q4.5 0.4 6.3 1 M18.4 9 L15.5 1.8 Q14.9 0.4 13.1 1" fill="none" stroke="#0854a0" stroke-width="1.4" stroke-linecap="round" stroke-linejoin="round" /></svg>
<div style="top:688.60px;font-size:17.8px;line-height:24px;color:#0854a0;white-space:pre;transform:scaleY(1.03);left:695px;transform-origin:0 18.00px;">Technische Informationen</div>
<svg style="left:920.4px;top:693px" width="20" height="19" viewBox="0 0 20 19"><rect x="0.8" y="0.9" width="17.4" height="16.6" fill="#fff" stroke="#0854a0" stroke-width="1.5"/><text x="9.5" y="15" font-family="Liberation Serif" font-weight="bold" font-size="16" fill="#0854a0" stroke="#0854a0" stroke-width="0.4" text-anchor="middle">i</text></svg>
<svg style="left:964px;top:692.6px" width="18" height="18" viewBox="0 0 18 18"><path d="M1.8 1.8 L15.6 15.6 M15.6 1.8 L1.8 15.6" fill="none" stroke="#bb0000" stroke-width="3.1"/></svg>
<svg style="left:775px;top:450px" width="14" height="20" viewBox="0 0 14 20"><path d="M0.5 0.3 V16.7 L4.3 13.3 L6.9 18.3 Q8 19.2 9.3 17.9 L7.6 13 L11.8 12.2 Z" fill="#fff" stroke="#16161e" stroke-width="1.05" stroke-linejoin="round"/></svg>
</body></html>
